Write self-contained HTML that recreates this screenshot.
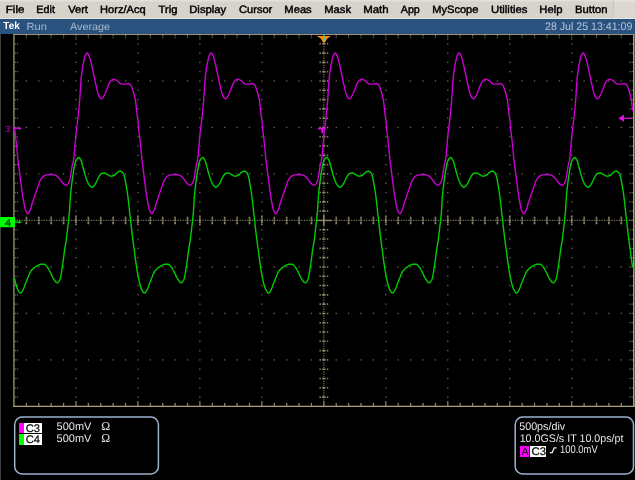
<!DOCTYPE html>
<html><head><meta charset="utf-8"><title>Tek</title>
<style>
html,body{margin:0;padding:0;background:#000;}
body{width:635px;height:480px;position:relative;overflow:hidden;font-family:"Liberation Sans",sans-serif;}
#menubar{position:absolute;left:0;top:0;width:635px;height:20px;background:linear-gradient(#e4e2dc 0px,#dcd9d2 1.6px,#d6d3cb 2.2px,#d6d3cb 17.6px,#e8e6e0 18.2px,#e8e6e0 20px);}
.mi,.t,.badge,#status span{will-change:transform;}
.mi{position:absolute;top:3px;font-size:10.6px;line-height:12px;color:#000;white-space:nowrap;-webkit-text-stroke:0.35px #000;}
#mdiv{position:absolute;left:613px;top:0;width:22px;height:18px;background:rgba(255,255,255,0.12);border-left:1px solid #cbc8c0;}
#status{position:absolute;left:0;top:19.4px;width:635px;height:14.2px;background:#2a527e;}
#status span{position:absolute;top:1px;font-size:10.6px;line-height:12px;white-space:nowrap;}
#lstrip{position:absolute;left:0;top:33.5px;width:1px;height:447px;background:#3c3c3c;}
svg{position:absolute;left:0;top:0;will-change:transform;}
.panel{position:absolute;box-sizing:border-box;border:1.6px solid #9cb2cf;border-radius:8px;}
.t{position:absolute;font-size:10.5px;line-height:12px;color:#e4e4e4;white-space:nowrap;}
.bx{position:absolute;}
</style></head><body>
<div id="menubar"><div id="mdiv"></div></div>
<div id="status"></div>
<div id="lstrip"></div>
<div class="bx" style="left:19.2px;top:422.8px;width:4.8px;height:10px;background:#ff00ff;"></div>
<div class="bx" style="left:24.2px;top:422.6px;width:18px;height:10.2px;background:#fff;"></div>
<div class="bx" style="left:19.2px;top:434.4px;width:4.8px;height:10.4px;background:#00ff00;"></div>
<div class="bx" style="left:24.2px;top:434.4px;width:18px;height:10.4px;background:#fff;"></div>
<div class="bx" style="left:519.9px;top:446.2px;width:9.5px;height:10.4px;background:#ff00ff;"></div>
<div class="bx" style="left:530.2px;top:446.2px;width:16.2px;height:10.4px;background:#fff;"></div>
<svg width="635" height="480" viewBox="0 0 635 480" text-rendering="geometricPrecision">
<g fill="#6c6854"><rect x="75.32" y="43.15" width="1.3" height="1.3"/><rect x="75.32" y="52.45" width="1.3" height="1.3"/><rect x="75.32" y="61.74" width="1.3" height="1.3"/><rect x="75.32" y="71.04" width="1.3" height="1.3"/><rect x="75.32" y="80.34" width="1.3" height="1.3"/><rect x="75.32" y="89.63" width="1.3" height="1.3"/><rect x="75.32" y="98.93" width="1.3" height="1.3"/><rect x="75.32" y="108.23" width="1.3" height="1.3"/><rect x="75.32" y="117.53" width="1.3" height="1.3"/><rect x="75.32" y="126.82" width="1.3" height="1.3"/><rect x="75.32" y="136.12" width="1.3" height="1.3"/><rect x="75.32" y="145.42" width="1.3" height="1.3"/><rect x="75.32" y="154.72" width="1.3" height="1.3"/><rect x="75.32" y="164.01" width="1.3" height="1.3"/><rect x="75.32" y="173.31" width="1.3" height="1.3"/><rect x="75.32" y="182.61" width="1.3" height="1.3"/><rect x="75.32" y="191.91" width="1.3" height="1.3"/><rect x="75.32" y="201.20" width="1.3" height="1.3"/><rect x="75.32" y="210.50" width="1.3" height="1.3"/><rect x="75.32" y="219.80" width="1.3" height="1.3"/><rect x="75.32" y="229.10" width="1.3" height="1.3"/><rect x="75.32" y="238.39" width="1.3" height="1.3"/><rect x="75.32" y="247.69" width="1.3" height="1.3"/><rect x="75.32" y="256.99" width="1.3" height="1.3"/><rect x="75.32" y="266.29" width="1.3" height="1.3"/><rect x="75.32" y="275.59" width="1.3" height="1.3"/><rect x="75.32" y="284.88" width="1.3" height="1.3"/><rect x="75.32" y="294.18" width="1.3" height="1.3"/><rect x="75.32" y="303.48" width="1.3" height="1.3"/><rect x="75.32" y="312.78" width="1.3" height="1.3"/><rect x="75.32" y="322.07" width="1.3" height="1.3"/><rect x="75.32" y="331.37" width="1.3" height="1.3"/><rect x="75.32" y="340.67" width="1.3" height="1.3"/><rect x="75.32" y="349.96" width="1.3" height="1.3"/><rect x="75.32" y="359.26" width="1.3" height="1.3"/><rect x="75.32" y="368.56" width="1.3" height="1.3"/><rect x="75.32" y="377.86" width="1.3" height="1.3"/><rect x="75.32" y="387.15" width="1.3" height="1.3"/><rect x="75.32" y="396.45" width="1.3" height="1.3"/><rect x="137.29" y="43.15" width="1.3" height="1.3"/><rect x="137.29" y="52.45" width="1.3" height="1.3"/><rect x="137.29" y="61.74" width="1.3" height="1.3"/><rect x="137.29" y="71.04" width="1.3" height="1.3"/><rect x="137.29" y="80.34" width="1.3" height="1.3"/><rect x="137.29" y="89.63" width="1.3" height="1.3"/><rect x="137.29" y="98.93" width="1.3" height="1.3"/><rect x="137.29" y="108.23" width="1.3" height="1.3"/><rect x="137.29" y="117.53" width="1.3" height="1.3"/><rect x="137.29" y="126.82" width="1.3" height="1.3"/><rect x="137.29" y="136.12" width="1.3" height="1.3"/><rect x="137.29" y="145.42" width="1.3" height="1.3"/><rect x="137.29" y="154.72" width="1.3" height="1.3"/><rect x="137.29" y="164.01" width="1.3" height="1.3"/><rect x="137.29" y="173.31" width="1.3" height="1.3"/><rect x="137.29" y="182.61" width="1.3" height="1.3"/><rect x="137.29" y="191.91" width="1.3" height="1.3"/><rect x="137.29" y="201.20" width="1.3" height="1.3"/><rect x="137.29" y="210.50" width="1.3" height="1.3"/><rect x="137.29" y="219.80" width="1.3" height="1.3"/><rect x="137.29" y="229.10" width="1.3" height="1.3"/><rect x="137.29" y="238.39" width="1.3" height="1.3"/><rect x="137.29" y="247.69" width="1.3" height="1.3"/><rect x="137.29" y="256.99" width="1.3" height="1.3"/><rect x="137.29" y="266.29" width="1.3" height="1.3"/><rect x="137.29" y="275.59" width="1.3" height="1.3"/><rect x="137.29" y="284.88" width="1.3" height="1.3"/><rect x="137.29" y="294.18" width="1.3" height="1.3"/><rect x="137.29" y="303.48" width="1.3" height="1.3"/><rect x="137.29" y="312.78" width="1.3" height="1.3"/><rect x="137.29" y="322.07" width="1.3" height="1.3"/><rect x="137.29" y="331.37" width="1.3" height="1.3"/><rect x="137.29" y="340.67" width="1.3" height="1.3"/><rect x="137.29" y="349.96" width="1.3" height="1.3"/><rect x="137.29" y="359.26" width="1.3" height="1.3"/><rect x="137.29" y="368.56" width="1.3" height="1.3"/><rect x="137.29" y="377.86" width="1.3" height="1.3"/><rect x="137.29" y="387.15" width="1.3" height="1.3"/><rect x="137.29" y="396.45" width="1.3" height="1.3"/><rect x="199.26" y="43.15" width="1.3" height="1.3"/><rect x="199.26" y="52.45" width="1.3" height="1.3"/><rect x="199.26" y="61.74" width="1.3" height="1.3"/><rect x="199.26" y="71.04" width="1.3" height="1.3"/><rect x="199.26" y="80.34" width="1.3" height="1.3"/><rect x="199.26" y="89.63" width="1.3" height="1.3"/><rect x="199.26" y="98.93" width="1.3" height="1.3"/><rect x="199.26" y="108.23" width="1.3" height="1.3"/><rect x="199.26" y="117.53" width="1.3" height="1.3"/><rect x="199.26" y="126.82" width="1.3" height="1.3"/><rect x="199.26" y="136.12" width="1.3" height="1.3"/><rect x="199.26" y="145.42" width="1.3" height="1.3"/><rect x="199.26" y="154.72" width="1.3" height="1.3"/><rect x="199.26" y="164.01" width="1.3" height="1.3"/><rect x="199.26" y="173.31" width="1.3" height="1.3"/><rect x="199.26" y="182.61" width="1.3" height="1.3"/><rect x="199.26" y="191.91" width="1.3" height="1.3"/><rect x="199.26" y="201.20" width="1.3" height="1.3"/><rect x="199.26" y="210.50" width="1.3" height="1.3"/><rect x="199.26" y="219.80" width="1.3" height="1.3"/><rect x="199.26" y="229.10" width="1.3" height="1.3"/><rect x="199.26" y="238.39" width="1.3" height="1.3"/><rect x="199.26" y="247.69" width="1.3" height="1.3"/><rect x="199.26" y="256.99" width="1.3" height="1.3"/><rect x="199.26" y="266.29" width="1.3" height="1.3"/><rect x="199.26" y="275.59" width="1.3" height="1.3"/><rect x="199.26" y="284.88" width="1.3" height="1.3"/><rect x="199.26" y="294.18" width="1.3" height="1.3"/><rect x="199.26" y="303.48" width="1.3" height="1.3"/><rect x="199.26" y="312.78" width="1.3" height="1.3"/><rect x="199.26" y="322.07" width="1.3" height="1.3"/><rect x="199.26" y="331.37" width="1.3" height="1.3"/><rect x="199.26" y="340.67" width="1.3" height="1.3"/><rect x="199.26" y="349.96" width="1.3" height="1.3"/><rect x="199.26" y="359.26" width="1.3" height="1.3"/><rect x="199.26" y="368.56" width="1.3" height="1.3"/><rect x="199.26" y="377.86" width="1.3" height="1.3"/><rect x="199.26" y="387.15" width="1.3" height="1.3"/><rect x="199.26" y="396.45" width="1.3" height="1.3"/><rect x="261.23" y="43.15" width="1.3" height="1.3"/><rect x="261.23" y="52.45" width="1.3" height="1.3"/><rect x="261.23" y="61.74" width="1.3" height="1.3"/><rect x="261.23" y="71.04" width="1.3" height="1.3"/><rect x="261.23" y="80.34" width="1.3" height="1.3"/><rect x="261.23" y="89.63" width="1.3" height="1.3"/><rect x="261.23" y="98.93" width="1.3" height="1.3"/><rect x="261.23" y="108.23" width="1.3" height="1.3"/><rect x="261.23" y="117.53" width="1.3" height="1.3"/><rect x="261.23" y="126.82" width="1.3" height="1.3"/><rect x="261.23" y="136.12" width="1.3" height="1.3"/><rect x="261.23" y="145.42" width="1.3" height="1.3"/><rect x="261.23" y="154.72" width="1.3" height="1.3"/><rect x="261.23" y="164.01" width="1.3" height="1.3"/><rect x="261.23" y="173.31" width="1.3" height="1.3"/><rect x="261.23" y="182.61" width="1.3" height="1.3"/><rect x="261.23" y="191.91" width="1.3" height="1.3"/><rect x="261.23" y="201.20" width="1.3" height="1.3"/><rect x="261.23" y="210.50" width="1.3" height="1.3"/><rect x="261.23" y="219.80" width="1.3" height="1.3"/><rect x="261.23" y="229.10" width="1.3" height="1.3"/><rect x="261.23" y="238.39" width="1.3" height="1.3"/><rect x="261.23" y="247.69" width="1.3" height="1.3"/><rect x="261.23" y="256.99" width="1.3" height="1.3"/><rect x="261.23" y="266.29" width="1.3" height="1.3"/><rect x="261.23" y="275.59" width="1.3" height="1.3"/><rect x="261.23" y="284.88" width="1.3" height="1.3"/><rect x="261.23" y="294.18" width="1.3" height="1.3"/><rect x="261.23" y="303.48" width="1.3" height="1.3"/><rect x="261.23" y="312.78" width="1.3" height="1.3"/><rect x="261.23" y="322.07" width="1.3" height="1.3"/><rect x="261.23" y="331.37" width="1.3" height="1.3"/><rect x="261.23" y="340.67" width="1.3" height="1.3"/><rect x="261.23" y="349.96" width="1.3" height="1.3"/><rect x="261.23" y="359.26" width="1.3" height="1.3"/><rect x="261.23" y="368.56" width="1.3" height="1.3"/><rect x="261.23" y="377.86" width="1.3" height="1.3"/><rect x="261.23" y="387.15" width="1.3" height="1.3"/><rect x="261.23" y="396.45" width="1.3" height="1.3"/><rect x="385.17" y="43.15" width="1.3" height="1.3"/><rect x="385.17" y="52.45" width="1.3" height="1.3"/><rect x="385.17" y="61.74" width="1.3" height="1.3"/><rect x="385.17" y="71.04" width="1.3" height="1.3"/><rect x="385.17" y="80.34" width="1.3" height="1.3"/><rect x="385.17" y="89.63" width="1.3" height="1.3"/><rect x="385.17" y="98.93" width="1.3" height="1.3"/><rect x="385.17" y="108.23" width="1.3" height="1.3"/><rect x="385.17" y="117.53" width="1.3" height="1.3"/><rect x="385.17" y="126.82" width="1.3" height="1.3"/><rect x="385.17" y="136.12" width="1.3" height="1.3"/><rect x="385.17" y="145.42" width="1.3" height="1.3"/><rect x="385.17" y="154.72" width="1.3" height="1.3"/><rect x="385.17" y="164.01" width="1.3" height="1.3"/><rect x="385.17" y="173.31" width="1.3" height="1.3"/><rect x="385.17" y="182.61" width="1.3" height="1.3"/><rect x="385.17" y="191.91" width="1.3" height="1.3"/><rect x="385.17" y="201.20" width="1.3" height="1.3"/><rect x="385.17" y="210.50" width="1.3" height="1.3"/><rect x="385.17" y="219.80" width="1.3" height="1.3"/><rect x="385.17" y="229.10" width="1.3" height="1.3"/><rect x="385.17" y="238.39" width="1.3" height="1.3"/><rect x="385.17" y="247.69" width="1.3" height="1.3"/><rect x="385.17" y="256.99" width="1.3" height="1.3"/><rect x="385.17" y="266.29" width="1.3" height="1.3"/><rect x="385.17" y="275.59" width="1.3" height="1.3"/><rect x="385.17" y="284.88" width="1.3" height="1.3"/><rect x="385.17" y="294.18" width="1.3" height="1.3"/><rect x="385.17" y="303.48" width="1.3" height="1.3"/><rect x="385.17" y="312.78" width="1.3" height="1.3"/><rect x="385.17" y="322.07" width="1.3" height="1.3"/><rect x="385.17" y="331.37" width="1.3" height="1.3"/><rect x="385.17" y="340.67" width="1.3" height="1.3"/><rect x="385.17" y="349.96" width="1.3" height="1.3"/><rect x="385.17" y="359.26" width="1.3" height="1.3"/><rect x="385.17" y="368.56" width="1.3" height="1.3"/><rect x="385.17" y="377.86" width="1.3" height="1.3"/><rect x="385.17" y="387.15" width="1.3" height="1.3"/><rect x="385.17" y="396.45" width="1.3" height="1.3"/><rect x="447.14" y="43.15" width="1.3" height="1.3"/><rect x="447.14" y="52.45" width="1.3" height="1.3"/><rect x="447.14" y="61.74" width="1.3" height="1.3"/><rect x="447.14" y="71.04" width="1.3" height="1.3"/><rect x="447.14" y="80.34" width="1.3" height="1.3"/><rect x="447.14" y="89.63" width="1.3" height="1.3"/><rect x="447.14" y="98.93" width="1.3" height="1.3"/><rect x="447.14" y="108.23" width="1.3" height="1.3"/><rect x="447.14" y="117.53" width="1.3" height="1.3"/><rect x="447.14" y="126.82" width="1.3" height="1.3"/><rect x="447.14" y="136.12" width="1.3" height="1.3"/><rect x="447.14" y="145.42" width="1.3" height="1.3"/><rect x="447.14" y="154.72" width="1.3" height="1.3"/><rect x="447.14" y="164.01" width="1.3" height="1.3"/><rect x="447.14" y="173.31" width="1.3" height="1.3"/><rect x="447.14" y="182.61" width="1.3" height="1.3"/><rect x="447.14" y="191.91" width="1.3" height="1.3"/><rect x="447.14" y="201.20" width="1.3" height="1.3"/><rect x="447.14" y="210.50" width="1.3" height="1.3"/><rect x="447.14" y="219.80" width="1.3" height="1.3"/><rect x="447.14" y="229.10" width="1.3" height="1.3"/><rect x="447.14" y="238.39" width="1.3" height="1.3"/><rect x="447.14" y="247.69" width="1.3" height="1.3"/><rect x="447.14" y="256.99" width="1.3" height="1.3"/><rect x="447.14" y="266.29" width="1.3" height="1.3"/><rect x="447.14" y="275.59" width="1.3" height="1.3"/><rect x="447.14" y="284.88" width="1.3" height="1.3"/><rect x="447.14" y="294.18" width="1.3" height="1.3"/><rect x="447.14" y="303.48" width="1.3" height="1.3"/><rect x="447.14" y="312.78" width="1.3" height="1.3"/><rect x="447.14" y="322.07" width="1.3" height="1.3"/><rect x="447.14" y="331.37" width="1.3" height="1.3"/><rect x="447.14" y="340.67" width="1.3" height="1.3"/><rect x="447.14" y="349.96" width="1.3" height="1.3"/><rect x="447.14" y="359.26" width="1.3" height="1.3"/><rect x="447.14" y="368.56" width="1.3" height="1.3"/><rect x="447.14" y="377.86" width="1.3" height="1.3"/><rect x="447.14" y="387.15" width="1.3" height="1.3"/><rect x="447.14" y="396.45" width="1.3" height="1.3"/><rect x="509.11" y="43.15" width="1.3" height="1.3"/><rect x="509.11" y="52.45" width="1.3" height="1.3"/><rect x="509.11" y="61.74" width="1.3" height="1.3"/><rect x="509.11" y="71.04" width="1.3" height="1.3"/><rect x="509.11" y="80.34" width="1.3" height="1.3"/><rect x="509.11" y="89.63" width="1.3" height="1.3"/><rect x="509.11" y="98.93" width="1.3" height="1.3"/><rect x="509.11" y="108.23" width="1.3" height="1.3"/><rect x="509.11" y="117.53" width="1.3" height="1.3"/><rect x="509.11" y="126.82" width="1.3" height="1.3"/><rect x="509.11" y="136.12" width="1.3" height="1.3"/><rect x="509.11" y="145.42" width="1.3" height="1.3"/><rect x="509.11" y="154.72" width="1.3" height="1.3"/><rect x="509.11" y="164.01" width="1.3" height="1.3"/><rect x="509.11" y="173.31" width="1.3" height="1.3"/><rect x="509.11" y="182.61" width="1.3" height="1.3"/><rect x="509.11" y="191.91" width="1.3" height="1.3"/><rect x="509.11" y="201.20" width="1.3" height="1.3"/><rect x="509.11" y="210.50" width="1.3" height="1.3"/><rect x="509.11" y="219.80" width="1.3" height="1.3"/><rect x="509.11" y="229.10" width="1.3" height="1.3"/><rect x="509.11" y="238.39" width="1.3" height="1.3"/><rect x="509.11" y="247.69" width="1.3" height="1.3"/><rect x="509.11" y="256.99" width="1.3" height="1.3"/><rect x="509.11" y="266.29" width="1.3" height="1.3"/><rect x="509.11" y="275.59" width="1.3" height="1.3"/><rect x="509.11" y="284.88" width="1.3" height="1.3"/><rect x="509.11" y="294.18" width="1.3" height="1.3"/><rect x="509.11" y="303.48" width="1.3" height="1.3"/><rect x="509.11" y="312.78" width="1.3" height="1.3"/><rect x="509.11" y="322.07" width="1.3" height="1.3"/><rect x="509.11" y="331.37" width="1.3" height="1.3"/><rect x="509.11" y="340.67" width="1.3" height="1.3"/><rect x="509.11" y="349.96" width="1.3" height="1.3"/><rect x="509.11" y="359.26" width="1.3" height="1.3"/><rect x="509.11" y="368.56" width="1.3" height="1.3"/><rect x="509.11" y="377.86" width="1.3" height="1.3"/><rect x="509.11" y="387.15" width="1.3" height="1.3"/><rect x="509.11" y="396.45" width="1.3" height="1.3"/><rect x="571.08" y="43.15" width="1.3" height="1.3"/><rect x="571.08" y="52.45" width="1.3" height="1.3"/><rect x="571.08" y="61.74" width="1.3" height="1.3"/><rect x="571.08" y="71.04" width="1.3" height="1.3"/><rect x="571.08" y="80.34" width="1.3" height="1.3"/><rect x="571.08" y="89.63" width="1.3" height="1.3"/><rect x="571.08" y="98.93" width="1.3" height="1.3"/><rect x="571.08" y="108.23" width="1.3" height="1.3"/><rect x="571.08" y="117.53" width="1.3" height="1.3"/><rect x="571.08" y="126.82" width="1.3" height="1.3"/><rect x="571.08" y="136.12" width="1.3" height="1.3"/><rect x="571.08" y="145.42" width="1.3" height="1.3"/><rect x="571.08" y="154.72" width="1.3" height="1.3"/><rect x="571.08" y="164.01" width="1.3" height="1.3"/><rect x="571.08" y="173.31" width="1.3" height="1.3"/><rect x="571.08" y="182.61" width="1.3" height="1.3"/><rect x="571.08" y="191.91" width="1.3" height="1.3"/><rect x="571.08" y="201.20" width="1.3" height="1.3"/><rect x="571.08" y="210.50" width="1.3" height="1.3"/><rect x="571.08" y="219.80" width="1.3" height="1.3"/><rect x="571.08" y="229.10" width="1.3" height="1.3"/><rect x="571.08" y="238.39" width="1.3" height="1.3"/><rect x="571.08" y="247.69" width="1.3" height="1.3"/><rect x="571.08" y="256.99" width="1.3" height="1.3"/><rect x="571.08" y="266.29" width="1.3" height="1.3"/><rect x="571.08" y="275.59" width="1.3" height="1.3"/><rect x="571.08" y="284.88" width="1.3" height="1.3"/><rect x="571.08" y="294.18" width="1.3" height="1.3"/><rect x="571.08" y="303.48" width="1.3" height="1.3"/><rect x="571.08" y="312.78" width="1.3" height="1.3"/><rect x="571.08" y="322.07" width="1.3" height="1.3"/><rect x="571.08" y="331.37" width="1.3" height="1.3"/><rect x="571.08" y="340.67" width="1.3" height="1.3"/><rect x="571.08" y="349.96" width="1.3" height="1.3"/><rect x="571.08" y="359.26" width="1.3" height="1.3"/><rect x="571.08" y="368.56" width="1.3" height="1.3"/><rect x="571.08" y="377.86" width="1.3" height="1.3"/><rect x="571.08" y="387.15" width="1.3" height="1.3"/><rect x="571.08" y="396.45" width="1.3" height="1.3"/><rect x="25.74" y="80.34" width="1.3" height="1.3"/><rect x="38.14" y="80.34" width="1.3" height="1.3"/><rect x="50.53" y="80.34" width="1.3" height="1.3"/><rect x="62.93" y="80.34" width="1.3" height="1.3"/><rect x="87.71" y="80.34" width="1.3" height="1.3"/><rect x="100.11" y="80.34" width="1.3" height="1.3"/><rect x="112.50" y="80.34" width="1.3" height="1.3"/><rect x="124.90" y="80.34" width="1.3" height="1.3"/><rect x="149.68" y="80.34" width="1.3" height="1.3"/><rect x="162.08" y="80.34" width="1.3" height="1.3"/><rect x="174.47" y="80.34" width="1.3" height="1.3"/><rect x="186.87" y="80.34" width="1.3" height="1.3"/><rect x="211.65" y="80.34" width="1.3" height="1.3"/><rect x="224.05" y="80.34" width="1.3" height="1.3"/><rect x="236.44" y="80.34" width="1.3" height="1.3"/><rect x="248.84" y="80.34" width="1.3" height="1.3"/><rect x="273.62" y="80.34" width="1.3" height="1.3"/><rect x="286.02" y="80.34" width="1.3" height="1.3"/><rect x="298.41" y="80.34" width="1.3" height="1.3"/><rect x="310.81" y="80.34" width="1.3" height="1.3"/><rect x="335.59" y="80.34" width="1.3" height="1.3"/><rect x="347.99" y="80.34" width="1.3" height="1.3"/><rect x="360.38" y="80.34" width="1.3" height="1.3"/><rect x="372.78" y="80.34" width="1.3" height="1.3"/><rect x="397.56" y="80.34" width="1.3" height="1.3"/><rect x="409.96" y="80.34" width="1.3" height="1.3"/><rect x="422.35" y="80.34" width="1.3" height="1.3"/><rect x="434.75" y="80.34" width="1.3" height="1.3"/><rect x="459.53" y="80.34" width="1.3" height="1.3"/><rect x="471.93" y="80.34" width="1.3" height="1.3"/><rect x="484.32" y="80.34" width="1.3" height="1.3"/><rect x="496.72" y="80.34" width="1.3" height="1.3"/><rect x="521.50" y="80.34" width="1.3" height="1.3"/><rect x="533.90" y="80.34" width="1.3" height="1.3"/><rect x="546.29" y="80.34" width="1.3" height="1.3"/><rect x="558.69" y="80.34" width="1.3" height="1.3"/><rect x="583.47" y="80.34" width="1.3" height="1.3"/><rect x="595.87" y="80.34" width="1.3" height="1.3"/><rect x="608.26" y="80.34" width="1.3" height="1.3"/><rect x="620.66" y="80.34" width="1.3" height="1.3"/><rect x="25.74" y="126.82" width="1.3" height="1.3"/><rect x="38.14" y="126.82" width="1.3" height="1.3"/><rect x="50.53" y="126.82" width="1.3" height="1.3"/><rect x="62.93" y="126.82" width="1.3" height="1.3"/><rect x="87.71" y="126.82" width="1.3" height="1.3"/><rect x="100.11" y="126.82" width="1.3" height="1.3"/><rect x="112.50" y="126.82" width="1.3" height="1.3"/><rect x="124.90" y="126.82" width="1.3" height="1.3"/><rect x="149.68" y="126.82" width="1.3" height="1.3"/><rect x="162.08" y="126.82" width="1.3" height="1.3"/><rect x="174.47" y="126.82" width="1.3" height="1.3"/><rect x="186.87" y="126.82" width="1.3" height="1.3"/><rect x="211.65" y="126.82" width="1.3" height="1.3"/><rect x="224.05" y="126.82" width="1.3" height="1.3"/><rect x="236.44" y="126.82" width="1.3" height="1.3"/><rect x="248.84" y="126.82" width="1.3" height="1.3"/><rect x="273.62" y="126.82" width="1.3" height="1.3"/><rect x="286.02" y="126.82" width="1.3" height="1.3"/><rect x="298.41" y="126.82" width="1.3" height="1.3"/><rect x="310.81" y="126.82" width="1.3" height="1.3"/><rect x="335.59" y="126.82" width="1.3" height="1.3"/><rect x="347.99" y="126.82" width="1.3" height="1.3"/><rect x="360.38" y="126.82" width="1.3" height="1.3"/><rect x="372.78" y="126.82" width="1.3" height="1.3"/><rect x="397.56" y="126.82" width="1.3" height="1.3"/><rect x="409.96" y="126.82" width="1.3" height="1.3"/><rect x="422.35" y="126.82" width="1.3" height="1.3"/><rect x="434.75" y="126.82" width="1.3" height="1.3"/><rect x="459.53" y="126.82" width="1.3" height="1.3"/><rect x="471.93" y="126.82" width="1.3" height="1.3"/><rect x="484.32" y="126.82" width="1.3" height="1.3"/><rect x="496.72" y="126.82" width="1.3" height="1.3"/><rect x="521.50" y="126.82" width="1.3" height="1.3"/><rect x="533.90" y="126.82" width="1.3" height="1.3"/><rect x="546.29" y="126.82" width="1.3" height="1.3"/><rect x="558.69" y="126.82" width="1.3" height="1.3"/><rect x="583.47" y="126.82" width="1.3" height="1.3"/><rect x="595.87" y="126.82" width="1.3" height="1.3"/><rect x="608.26" y="126.82" width="1.3" height="1.3"/><rect x="620.66" y="126.82" width="1.3" height="1.3"/><rect x="25.74" y="173.31" width="1.3" height="1.3"/><rect x="38.14" y="173.31" width="1.3" height="1.3"/><rect x="50.53" y="173.31" width="1.3" height="1.3"/><rect x="62.93" y="173.31" width="1.3" height="1.3"/><rect x="87.71" y="173.31" width="1.3" height="1.3"/><rect x="100.11" y="173.31" width="1.3" height="1.3"/><rect x="112.50" y="173.31" width="1.3" height="1.3"/><rect x="124.90" y="173.31" width="1.3" height="1.3"/><rect x="149.68" y="173.31" width="1.3" height="1.3"/><rect x="162.08" y="173.31" width="1.3" height="1.3"/><rect x="174.47" y="173.31" width="1.3" height="1.3"/><rect x="186.87" y="173.31" width="1.3" height="1.3"/><rect x="211.65" y="173.31" width="1.3" height="1.3"/><rect x="224.05" y="173.31" width="1.3" height="1.3"/><rect x="236.44" y="173.31" width="1.3" height="1.3"/><rect x="248.84" y="173.31" width="1.3" height="1.3"/><rect x="273.62" y="173.31" width="1.3" height="1.3"/><rect x="286.02" y="173.31" width="1.3" height="1.3"/><rect x="298.41" y="173.31" width="1.3" height="1.3"/><rect x="310.81" y="173.31" width="1.3" height="1.3"/><rect x="335.59" y="173.31" width="1.3" height="1.3"/><rect x="347.99" y="173.31" width="1.3" height="1.3"/><rect x="360.38" y="173.31" width="1.3" height="1.3"/><rect x="372.78" y="173.31" width="1.3" height="1.3"/><rect x="397.56" y="173.31" width="1.3" height="1.3"/><rect x="409.96" y="173.31" width="1.3" height="1.3"/><rect x="422.35" y="173.31" width="1.3" height="1.3"/><rect x="434.75" y="173.31" width="1.3" height="1.3"/><rect x="459.53" y="173.31" width="1.3" height="1.3"/><rect x="471.93" y="173.31" width="1.3" height="1.3"/><rect x="484.32" y="173.31" width="1.3" height="1.3"/><rect x="496.72" y="173.31" width="1.3" height="1.3"/><rect x="521.50" y="173.31" width="1.3" height="1.3"/><rect x="533.90" y="173.31" width="1.3" height="1.3"/><rect x="546.29" y="173.31" width="1.3" height="1.3"/><rect x="558.69" y="173.31" width="1.3" height="1.3"/><rect x="583.47" y="173.31" width="1.3" height="1.3"/><rect x="595.87" y="173.31" width="1.3" height="1.3"/><rect x="608.26" y="173.31" width="1.3" height="1.3"/><rect x="620.66" y="173.31" width="1.3" height="1.3"/><rect x="25.74" y="266.29" width="1.3" height="1.3"/><rect x="38.14" y="266.29" width="1.3" height="1.3"/><rect x="50.53" y="266.29" width="1.3" height="1.3"/><rect x="62.93" y="266.29" width="1.3" height="1.3"/><rect x="87.71" y="266.29" width="1.3" height="1.3"/><rect x="100.11" y="266.29" width="1.3" height="1.3"/><rect x="112.50" y="266.29" width="1.3" height="1.3"/><rect x="124.90" y="266.29" width="1.3" height="1.3"/><rect x="149.68" y="266.29" width="1.3" height="1.3"/><rect x="162.08" y="266.29" width="1.3" height="1.3"/><rect x="174.47" y="266.29" width="1.3" height="1.3"/><rect x="186.87" y="266.29" width="1.3" height="1.3"/><rect x="211.65" y="266.29" width="1.3" height="1.3"/><rect x="224.05" y="266.29" width="1.3" height="1.3"/><rect x="236.44" y="266.29" width="1.3" height="1.3"/><rect x="248.84" y="266.29" width="1.3" height="1.3"/><rect x="273.62" y="266.29" width="1.3" height="1.3"/><rect x="286.02" y="266.29" width="1.3" height="1.3"/><rect x="298.41" y="266.29" width="1.3" height="1.3"/><rect x="310.81" y="266.29" width="1.3" height="1.3"/><rect x="335.59" y="266.29" width="1.3" height="1.3"/><rect x="347.99" y="266.29" width="1.3" height="1.3"/><rect x="360.38" y="266.29" width="1.3" height="1.3"/><rect x="372.78" y="266.29" width="1.3" height="1.3"/><rect x="397.56" y="266.29" width="1.3" height="1.3"/><rect x="409.96" y="266.29" width="1.3" height="1.3"/><rect x="422.35" y="266.29" width="1.3" height="1.3"/><rect x="434.75" y="266.29" width="1.3" height="1.3"/><rect x="459.53" y="266.29" width="1.3" height="1.3"/><rect x="471.93" y="266.29" width="1.3" height="1.3"/><rect x="484.32" y="266.29" width="1.3" height="1.3"/><rect x="496.72" y="266.29" width="1.3" height="1.3"/><rect x="521.50" y="266.29" width="1.3" height="1.3"/><rect x="533.90" y="266.29" width="1.3" height="1.3"/><rect x="546.29" y="266.29" width="1.3" height="1.3"/><rect x="558.69" y="266.29" width="1.3" height="1.3"/><rect x="583.47" y="266.29" width="1.3" height="1.3"/><rect x="595.87" y="266.29" width="1.3" height="1.3"/><rect x="608.26" y="266.29" width="1.3" height="1.3"/><rect x="620.66" y="266.29" width="1.3" height="1.3"/><rect x="25.74" y="312.77" width="1.3" height="1.3"/><rect x="38.14" y="312.77" width="1.3" height="1.3"/><rect x="50.53" y="312.77" width="1.3" height="1.3"/><rect x="62.93" y="312.77" width="1.3" height="1.3"/><rect x="87.71" y="312.77" width="1.3" height="1.3"/><rect x="100.11" y="312.77" width="1.3" height="1.3"/><rect x="112.50" y="312.77" width="1.3" height="1.3"/><rect x="124.90" y="312.77" width="1.3" height="1.3"/><rect x="149.68" y="312.77" width="1.3" height="1.3"/><rect x="162.08" y="312.77" width="1.3" height="1.3"/><rect x="174.47" y="312.77" width="1.3" height="1.3"/><rect x="186.87" y="312.77" width="1.3" height="1.3"/><rect x="211.65" y="312.77" width="1.3" height="1.3"/><rect x="224.05" y="312.77" width="1.3" height="1.3"/><rect x="236.44" y="312.77" width="1.3" height="1.3"/><rect x="248.84" y="312.77" width="1.3" height="1.3"/><rect x="273.62" y="312.77" width="1.3" height="1.3"/><rect x="286.02" y="312.77" width="1.3" height="1.3"/><rect x="298.41" y="312.77" width="1.3" height="1.3"/><rect x="310.81" y="312.77" width="1.3" height="1.3"/><rect x="335.59" y="312.77" width="1.3" height="1.3"/><rect x="347.99" y="312.77" width="1.3" height="1.3"/><rect x="360.38" y="312.77" width="1.3" height="1.3"/><rect x="372.78" y="312.77" width="1.3" height="1.3"/><rect x="397.56" y="312.77" width="1.3" height="1.3"/><rect x="409.96" y="312.77" width="1.3" height="1.3"/><rect x="422.35" y="312.77" width="1.3" height="1.3"/><rect x="434.75" y="312.77" width="1.3" height="1.3"/><rect x="459.53" y="312.77" width="1.3" height="1.3"/><rect x="471.93" y="312.77" width="1.3" height="1.3"/><rect x="484.32" y="312.77" width="1.3" height="1.3"/><rect x="496.72" y="312.77" width="1.3" height="1.3"/><rect x="521.50" y="312.77" width="1.3" height="1.3"/><rect x="533.90" y="312.77" width="1.3" height="1.3"/><rect x="546.29" y="312.77" width="1.3" height="1.3"/><rect x="558.69" y="312.77" width="1.3" height="1.3"/><rect x="583.47" y="312.77" width="1.3" height="1.3"/><rect x="595.87" y="312.77" width="1.3" height="1.3"/><rect x="608.26" y="312.77" width="1.3" height="1.3"/><rect x="620.66" y="312.77" width="1.3" height="1.3"/><rect x="25.74" y="359.26" width="1.3" height="1.3"/><rect x="38.14" y="359.26" width="1.3" height="1.3"/><rect x="50.53" y="359.26" width="1.3" height="1.3"/><rect x="62.93" y="359.26" width="1.3" height="1.3"/><rect x="87.71" y="359.26" width="1.3" height="1.3"/><rect x="100.11" y="359.26" width="1.3" height="1.3"/><rect x="112.50" y="359.26" width="1.3" height="1.3"/><rect x="124.90" y="359.26" width="1.3" height="1.3"/><rect x="149.68" y="359.26" width="1.3" height="1.3"/><rect x="162.08" y="359.26" width="1.3" height="1.3"/><rect x="174.47" y="359.26" width="1.3" height="1.3"/><rect x="186.87" y="359.26" width="1.3" height="1.3"/><rect x="211.65" y="359.26" width="1.3" height="1.3"/><rect x="224.05" y="359.26" width="1.3" height="1.3"/><rect x="236.44" y="359.26" width="1.3" height="1.3"/><rect x="248.84" y="359.26" width="1.3" height="1.3"/><rect x="273.62" y="359.26" width="1.3" height="1.3"/><rect x="286.02" y="359.26" width="1.3" height="1.3"/><rect x="298.41" y="359.26" width="1.3" height="1.3"/><rect x="310.81" y="359.26" width="1.3" height="1.3"/><rect x="335.59" y="359.26" width="1.3" height="1.3"/><rect x="347.99" y="359.26" width="1.3" height="1.3"/><rect x="360.38" y="359.26" width="1.3" height="1.3"/><rect x="372.78" y="359.26" width="1.3" height="1.3"/><rect x="397.56" y="359.26" width="1.3" height="1.3"/><rect x="409.96" y="359.26" width="1.3" height="1.3"/><rect x="422.35" y="359.26" width="1.3" height="1.3"/><rect x="434.75" y="359.26" width="1.3" height="1.3"/><rect x="459.53" y="359.26" width="1.3" height="1.3"/><rect x="471.93" y="359.26" width="1.3" height="1.3"/><rect x="484.32" y="359.26" width="1.3" height="1.3"/><rect x="496.72" y="359.26" width="1.3" height="1.3"/><rect x="521.50" y="359.26" width="1.3" height="1.3"/><rect x="533.90" y="359.26" width="1.3" height="1.3"/><rect x="546.29" y="359.26" width="1.3" height="1.3"/><rect x="558.69" y="359.26" width="1.3" height="1.3"/><rect x="583.47" y="359.26" width="1.3" height="1.3"/><rect x="595.87" y="359.26" width="1.3" height="1.3"/><rect x="608.26" y="359.26" width="1.3" height="1.3"/><rect x="620.66" y="359.26" width="1.3" height="1.3"/></g>
<g stroke="#77725c" stroke-width="1.2" stroke-dasharray="1.1 1.0 1.2 0.8 1.2 5"><line x1="26.39" y1="35.10" x2="26.39" y2="38.20"/><line x1="38.79" y1="35.10" x2="38.79" y2="38.20"/><line x1="51.18" y1="35.10" x2="51.18" y2="38.20"/><line x1="63.58" y1="35.10" x2="63.58" y2="38.20"/><line x1="75.97" y1="35.10" x2="75.97" y2="40.10"/><line x1="88.36" y1="35.10" x2="88.36" y2="38.20"/><line x1="100.76" y1="35.10" x2="100.76" y2="38.20"/><line x1="113.15" y1="35.10" x2="113.15" y2="38.20"/><line x1="125.55" y1="35.10" x2="125.55" y2="38.20"/><line x1="137.94" y1="35.10" x2="137.94" y2="40.10"/><line x1="150.33" y1="35.10" x2="150.33" y2="38.20"/><line x1="162.73" y1="35.10" x2="162.73" y2="38.20"/><line x1="175.12" y1="35.10" x2="175.12" y2="38.20"/><line x1="187.52" y1="35.10" x2="187.52" y2="38.20"/><line x1="199.91" y1="35.10" x2="199.91" y2="40.10"/><line x1="212.30" y1="35.10" x2="212.30" y2="38.20"/><line x1="224.70" y1="35.10" x2="224.70" y2="38.20"/><line x1="237.09" y1="35.10" x2="237.09" y2="38.20"/><line x1="249.49" y1="35.10" x2="249.49" y2="38.20"/><line x1="261.88" y1="35.10" x2="261.88" y2="40.10"/><line x1="274.27" y1="35.10" x2="274.27" y2="38.20"/><line x1="286.67" y1="35.10" x2="286.67" y2="38.20"/><line x1="299.06" y1="35.10" x2="299.06" y2="38.20"/><line x1="311.46" y1="35.10" x2="311.46" y2="38.20"/><line x1="323.85" y1="35.10" x2="323.85" y2="40.10"/><line x1="336.24" y1="35.10" x2="336.24" y2="38.20"/><line x1="348.64" y1="35.10" x2="348.64" y2="38.20"/><line x1="361.03" y1="35.10" x2="361.03" y2="38.20"/><line x1="373.43" y1="35.10" x2="373.43" y2="38.20"/><line x1="385.82" y1="35.10" x2="385.82" y2="40.10"/><line x1="398.21" y1="35.10" x2="398.21" y2="38.20"/><line x1="410.61" y1="35.10" x2="410.61" y2="38.20"/><line x1="423.00" y1="35.10" x2="423.00" y2="38.20"/><line x1="435.40" y1="35.10" x2="435.40" y2="38.20"/><line x1="447.79" y1="35.10" x2="447.79" y2="40.10"/><line x1="460.18" y1="35.10" x2="460.18" y2="38.20"/><line x1="472.58" y1="35.10" x2="472.58" y2="38.20"/><line x1="484.97" y1="35.10" x2="484.97" y2="38.20"/><line x1="497.37" y1="35.10" x2="497.37" y2="38.20"/><line x1="509.76" y1="35.10" x2="509.76" y2="40.10"/><line x1="522.15" y1="35.10" x2="522.15" y2="38.20"/><line x1="534.55" y1="35.10" x2="534.55" y2="38.20"/><line x1="546.94" y1="35.10" x2="546.94" y2="38.20"/><line x1="559.34" y1="35.10" x2="559.34" y2="38.20"/><line x1="571.73" y1="35.10" x2="571.73" y2="40.10"/><line x1="584.12" y1="35.10" x2="584.12" y2="38.20"/><line x1="596.52" y1="35.10" x2="596.52" y2="38.20"/><line x1="608.91" y1="35.10" x2="608.91" y2="38.20"/><line x1="621.31" y1="35.10" x2="621.31" y2="38.20"/><line x1="14.70" y1="43.80" x2="18.60" y2="43.80"/><line x1="632.80" y1="43.80" x2="628.90" y2="43.80"/><line x1="14.70" y1="53.09" x2="18.60" y2="53.09"/><line x1="632.80" y1="53.09" x2="628.90" y2="53.09"/><line x1="14.70" y1="62.39" x2="18.60" y2="62.39"/><line x1="632.80" y1="62.39" x2="628.90" y2="62.39"/><line x1="14.70" y1="71.69" x2="18.60" y2="71.69"/><line x1="632.80" y1="71.69" x2="628.90" y2="71.69"/><line x1="14.70" y1="80.99" x2="18.60" y2="80.99"/><line x1="632.80" y1="80.99" x2="628.90" y2="80.99"/><line x1="14.70" y1="90.28" x2="18.60" y2="90.28"/><line x1="632.80" y1="90.28" x2="628.90" y2="90.28"/><line x1="14.70" y1="99.58" x2="18.60" y2="99.58"/><line x1="632.80" y1="99.58" x2="628.90" y2="99.58"/><line x1="14.70" y1="108.88" x2="18.60" y2="108.88"/><line x1="632.80" y1="108.88" x2="628.90" y2="108.88"/><line x1="14.70" y1="118.18" x2="18.60" y2="118.18"/><line x1="632.80" y1="118.18" x2="628.90" y2="118.18"/><line x1="14.70" y1="127.47" x2="18.60" y2="127.47"/><line x1="632.80" y1="127.47" x2="628.90" y2="127.47"/><line x1="14.70" y1="136.77" x2="18.60" y2="136.77"/><line x1="632.80" y1="136.77" x2="628.90" y2="136.77"/><line x1="14.70" y1="146.07" x2="18.60" y2="146.07"/><line x1="632.80" y1="146.07" x2="628.90" y2="146.07"/><line x1="14.70" y1="155.37" x2="18.60" y2="155.37"/><line x1="632.80" y1="155.37" x2="628.90" y2="155.37"/><line x1="14.70" y1="164.66" x2="18.60" y2="164.66"/><line x1="632.80" y1="164.66" x2="628.90" y2="164.66"/><line x1="14.70" y1="173.96" x2="18.60" y2="173.96"/><line x1="632.80" y1="173.96" x2="628.90" y2="173.96"/><line x1="14.70" y1="183.26" x2="18.60" y2="183.26"/><line x1="632.80" y1="183.26" x2="628.90" y2="183.26"/><line x1="14.70" y1="192.56" x2="18.60" y2="192.56"/><line x1="632.80" y1="192.56" x2="628.90" y2="192.56"/><line x1="14.70" y1="201.85" x2="18.60" y2="201.85"/><line x1="632.80" y1="201.85" x2="628.90" y2="201.85"/><line x1="14.70" y1="211.15" x2="18.60" y2="211.15"/><line x1="632.80" y1="211.15" x2="628.90" y2="211.15"/><line x1="14.70" y1="220.45" x2="18.60" y2="220.45"/><line x1="632.80" y1="220.45" x2="628.90" y2="220.45"/><line x1="14.70" y1="229.75" x2="18.60" y2="229.75"/><line x1="632.80" y1="229.75" x2="628.90" y2="229.75"/><line x1="14.70" y1="239.04" x2="18.60" y2="239.04"/><line x1="632.80" y1="239.04" x2="628.90" y2="239.04"/><line x1="14.70" y1="248.34" x2="18.60" y2="248.34"/><line x1="632.80" y1="248.34" x2="628.90" y2="248.34"/><line x1="14.70" y1="257.64" x2="18.60" y2="257.64"/><line x1="632.80" y1="257.64" x2="628.90" y2="257.64"/><line x1="14.70" y1="266.94" x2="18.60" y2="266.94"/><line x1="632.80" y1="266.94" x2="628.90" y2="266.94"/><line x1="14.70" y1="276.24" x2="18.60" y2="276.24"/><line x1="632.80" y1="276.24" x2="628.90" y2="276.24"/><line x1="14.70" y1="285.53" x2="18.60" y2="285.53"/><line x1="632.80" y1="285.53" x2="628.90" y2="285.53"/><line x1="14.70" y1="294.83" x2="18.60" y2="294.83"/><line x1="632.80" y1="294.83" x2="628.90" y2="294.83"/><line x1="14.70" y1="304.13" x2="18.60" y2="304.13"/><line x1="632.80" y1="304.13" x2="628.90" y2="304.13"/><line x1="14.70" y1="313.43" x2="18.60" y2="313.43"/><line x1="632.80" y1="313.43" x2="628.90" y2="313.43"/><line x1="14.70" y1="322.72" x2="18.60" y2="322.72"/><line x1="632.80" y1="322.72" x2="628.90" y2="322.72"/><line x1="14.70" y1="332.02" x2="18.60" y2="332.02"/><line x1="632.80" y1="332.02" x2="628.90" y2="332.02"/><line x1="14.70" y1="341.32" x2="18.60" y2="341.32"/><line x1="632.80" y1="341.32" x2="628.90" y2="341.32"/><line x1="14.70" y1="350.61" x2="18.60" y2="350.61"/><line x1="632.80" y1="350.61" x2="628.90" y2="350.61"/><line x1="14.70" y1="359.91" x2="18.60" y2="359.91"/><line x1="632.80" y1="359.91" x2="628.90" y2="359.91"/><line x1="14.70" y1="369.21" x2="18.60" y2="369.21"/><line x1="632.80" y1="369.21" x2="628.90" y2="369.21"/><line x1="14.70" y1="378.51" x2="18.60" y2="378.51"/><line x1="632.80" y1="378.51" x2="628.90" y2="378.51"/><line x1="14.70" y1="387.80" x2="18.60" y2="387.80"/><line x1="632.80" y1="387.80" x2="628.90" y2="387.80"/><line x1="14.70" y1="397.10" x2="18.60" y2="397.10"/><line x1="632.80" y1="397.10" x2="628.90" y2="397.10"/></g>
<g stroke="#8c866a" stroke-width="1.25"><line x1="26.39" y1="405.90" x2="26.39" y2="402.90"/><line x1="38.79" y1="405.90" x2="38.79" y2="402.90"/><line x1="51.18" y1="405.90" x2="51.18" y2="402.90"/><line x1="63.58" y1="405.90" x2="63.58" y2="402.90"/><line x1="75.97" y1="405.90" x2="75.97" y2="401.00"/><line x1="88.36" y1="405.90" x2="88.36" y2="402.90"/><line x1="100.76" y1="405.90" x2="100.76" y2="402.90"/><line x1="113.15" y1="405.90" x2="113.15" y2="402.90"/><line x1="125.55" y1="405.90" x2="125.55" y2="402.90"/><line x1="137.94" y1="405.90" x2="137.94" y2="401.00"/><line x1="150.33" y1="405.90" x2="150.33" y2="402.90"/><line x1="162.73" y1="405.90" x2="162.73" y2="402.90"/><line x1="175.12" y1="405.90" x2="175.12" y2="402.90"/><line x1="187.52" y1="405.90" x2="187.52" y2="402.90"/><line x1="199.91" y1="405.90" x2="199.91" y2="401.00"/><line x1="212.30" y1="405.90" x2="212.30" y2="402.90"/><line x1="224.70" y1="405.90" x2="224.70" y2="402.90"/><line x1="237.09" y1="405.90" x2="237.09" y2="402.90"/><line x1="249.49" y1="405.90" x2="249.49" y2="402.90"/><line x1="261.88" y1="405.90" x2="261.88" y2="401.00"/><line x1="274.27" y1="405.90" x2="274.27" y2="402.90"/><line x1="286.67" y1="405.90" x2="286.67" y2="402.90"/><line x1="299.06" y1="405.90" x2="299.06" y2="402.90"/><line x1="311.46" y1="405.90" x2="311.46" y2="402.90"/><line x1="323.85" y1="405.90" x2="323.85" y2="401.00"/><line x1="336.24" y1="405.90" x2="336.24" y2="402.90"/><line x1="348.64" y1="405.90" x2="348.64" y2="402.90"/><line x1="361.03" y1="405.90" x2="361.03" y2="402.90"/><line x1="373.43" y1="405.90" x2="373.43" y2="402.90"/><line x1="385.82" y1="405.90" x2="385.82" y2="401.00"/><line x1="398.21" y1="405.90" x2="398.21" y2="402.90"/><line x1="410.61" y1="405.90" x2="410.61" y2="402.90"/><line x1="423.00" y1="405.90" x2="423.00" y2="402.90"/><line x1="435.40" y1="405.90" x2="435.40" y2="402.90"/><line x1="447.79" y1="405.90" x2="447.79" y2="401.00"/><line x1="460.18" y1="405.90" x2="460.18" y2="402.90"/><line x1="472.58" y1="405.90" x2="472.58" y2="402.90"/><line x1="484.97" y1="405.90" x2="484.97" y2="402.90"/><line x1="497.37" y1="405.90" x2="497.37" y2="402.90"/><line x1="509.76" y1="405.90" x2="509.76" y2="401.00"/><line x1="522.15" y1="405.90" x2="522.15" y2="402.90"/><line x1="534.55" y1="405.90" x2="534.55" y2="402.90"/><line x1="546.94" y1="405.90" x2="546.94" y2="402.90"/><line x1="559.34" y1="405.90" x2="559.34" y2="402.90"/><line x1="571.73" y1="405.90" x2="571.73" y2="401.00"/><line x1="584.12" y1="405.90" x2="584.12" y2="402.90"/><line x1="596.52" y1="405.90" x2="596.52" y2="402.90"/><line x1="608.91" y1="405.90" x2="608.91" y2="402.90"/><line x1="621.31" y1="405.90" x2="621.31" y2="402.90"/></g>
<line x1="14.0" y1="220.45" x2="633.7" y2="220.45" stroke="#767159" stroke-width="1.2" stroke-dasharray="1.2 1.279"/>
<line x1="323.85" y1="34.5" x2="323.85" y2="406.4" stroke="#767159" stroke-width="1.2" stroke-dasharray="1.2 1.124"/>
<g stroke="#8a846a" stroke-width="1.7" stroke-dasharray="2.2 0.45"><line x1="26.39" y1="216.65" x2="26.39" y2="224.25"/><line x1="38.79" y1="216.65" x2="38.79" y2="224.25"/><line x1="51.18" y1="216.65" x2="51.18" y2="224.25"/><line x1="63.58" y1="216.65" x2="63.58" y2="224.25"/><line x1="75.97" y1="215.55" x2="75.97" y2="225.35"/><line x1="88.36" y1="216.65" x2="88.36" y2="224.25"/><line x1="100.76" y1="216.65" x2="100.76" y2="224.25"/><line x1="113.15" y1="216.65" x2="113.15" y2="224.25"/><line x1="125.55" y1="216.65" x2="125.55" y2="224.25"/><line x1="137.94" y1="215.55" x2="137.94" y2="225.35"/><line x1="150.33" y1="216.65" x2="150.33" y2="224.25"/><line x1="162.73" y1="216.65" x2="162.73" y2="224.25"/><line x1="175.12" y1="216.65" x2="175.12" y2="224.25"/><line x1="187.52" y1="216.65" x2="187.52" y2="224.25"/><line x1="199.91" y1="215.55" x2="199.91" y2="225.35"/><line x1="212.30" y1="216.65" x2="212.30" y2="224.25"/><line x1="224.70" y1="216.65" x2="224.70" y2="224.25"/><line x1="237.09" y1="216.65" x2="237.09" y2="224.25"/><line x1="249.49" y1="216.65" x2="249.49" y2="224.25"/><line x1="261.88" y1="215.55" x2="261.88" y2="225.35"/><line x1="274.27" y1="216.65" x2="274.27" y2="224.25"/><line x1="286.67" y1="216.65" x2="286.67" y2="224.25"/><line x1="299.06" y1="216.65" x2="299.06" y2="224.25"/><line x1="311.46" y1="216.65" x2="311.46" y2="224.25"/><line x1="336.24" y1="216.65" x2="336.24" y2="224.25"/><line x1="348.64" y1="216.65" x2="348.64" y2="224.25"/><line x1="361.03" y1="216.65" x2="361.03" y2="224.25"/><line x1="373.43" y1="216.65" x2="373.43" y2="224.25"/><line x1="385.82" y1="215.55" x2="385.82" y2="225.35"/><line x1="398.21" y1="216.65" x2="398.21" y2="224.25"/><line x1="410.61" y1="216.65" x2="410.61" y2="224.25"/><line x1="423.00" y1="216.65" x2="423.00" y2="224.25"/><line x1="435.40" y1="216.65" x2="435.40" y2="224.25"/><line x1="447.79" y1="215.55" x2="447.79" y2="225.35"/><line x1="460.18" y1="216.65" x2="460.18" y2="224.25"/><line x1="472.58" y1="216.65" x2="472.58" y2="224.25"/><line x1="484.97" y1="216.65" x2="484.97" y2="224.25"/><line x1="497.37" y1="216.65" x2="497.37" y2="224.25"/><line x1="509.76" y1="215.55" x2="509.76" y2="225.35"/><line x1="522.15" y1="216.65" x2="522.15" y2="224.25"/><line x1="534.55" y1="216.65" x2="534.55" y2="224.25"/><line x1="546.94" y1="216.65" x2="546.94" y2="224.25"/><line x1="559.34" y1="216.65" x2="559.34" y2="224.25"/><line x1="571.73" y1="215.55" x2="571.73" y2="225.35"/><line x1="584.12" y1="216.65" x2="584.12" y2="224.25"/><line x1="596.52" y1="216.65" x2="596.52" y2="224.25"/><line x1="608.91" y1="216.65" x2="608.91" y2="224.25"/><line x1="621.31" y1="216.65" x2="621.31" y2="224.25"/></g>
<g stroke="#8a846a" stroke-width="1.6" stroke-dasharray="1.4 1.3 3.4 1.3 1.4"><line x1="319.45" y1="43.80" x2="328.25" y2="43.80"/><line x1="319.45" y1="53.09" x2="328.25" y2="53.09"/><line x1="319.45" y1="62.39" x2="328.25" y2="62.39"/><line x1="319.45" y1="71.69" x2="328.25" y2="71.69"/><line x1="319.45" y1="80.99" x2="328.25" y2="80.99"/><line x1="319.45" y1="90.28" x2="328.25" y2="90.28"/><line x1="319.45" y1="99.58" x2="328.25" y2="99.58"/><line x1="319.45" y1="108.88" x2="328.25" y2="108.88"/><line x1="319.45" y1="118.18" x2="328.25" y2="118.18"/><line x1="319.45" y1="127.47" x2="328.25" y2="127.47"/><line x1="319.45" y1="136.77" x2="328.25" y2="136.77"/><line x1="319.45" y1="146.07" x2="328.25" y2="146.07"/><line x1="319.45" y1="155.37" x2="328.25" y2="155.37"/><line x1="319.45" y1="164.66" x2="328.25" y2="164.66"/><line x1="319.45" y1="173.96" x2="328.25" y2="173.96"/><line x1="319.45" y1="183.26" x2="328.25" y2="183.26"/><line x1="319.45" y1="192.56" x2="328.25" y2="192.56"/><line x1="319.45" y1="201.85" x2="328.25" y2="201.85"/><line x1="319.45" y1="211.15" x2="328.25" y2="211.15"/><line x1="319.45" y1="229.75" x2="328.25" y2="229.75"/><line x1="319.45" y1="239.04" x2="328.25" y2="239.04"/><line x1="319.45" y1="248.34" x2="328.25" y2="248.34"/><line x1="319.45" y1="257.64" x2="328.25" y2="257.64"/><line x1="319.45" y1="266.94" x2="328.25" y2="266.94"/><line x1="319.45" y1="276.24" x2="328.25" y2="276.24"/><line x1="319.45" y1="285.53" x2="328.25" y2="285.53"/><line x1="319.45" y1="294.83" x2="328.25" y2="294.83"/><line x1="319.45" y1="304.13" x2="328.25" y2="304.13"/><line x1="319.45" y1="313.43" x2="328.25" y2="313.43"/><line x1="319.45" y1="322.72" x2="328.25" y2="322.72"/><line x1="319.45" y1="332.02" x2="328.25" y2="332.02"/><line x1="319.45" y1="341.32" x2="328.25" y2="341.32"/><line x1="319.45" y1="350.61" x2="328.25" y2="350.61"/><line x1="319.45" y1="359.91" x2="328.25" y2="359.91"/><line x1="319.45" y1="369.21" x2="328.25" y2="369.21"/><line x1="319.45" y1="378.51" x2="328.25" y2="378.51"/><line x1="319.45" y1="387.80" x2="328.25" y2="387.80"/><line x1="319.45" y1="397.10" x2="328.25" y2="397.10"/></g>
<line x1="316.25" y1="220.45" x2="331.65" y2="220.45" stroke="#8a846a" stroke-width="1.4"/>
<line x1="323.85" y1="215.05" x2="323.85" y2="225.85" stroke="#8a846a" stroke-width="1.6"/>
<line x1="13.95" y1="34.0" x2="13.95" y2="407.0" stroke="#a89f7c" stroke-width="1.25"/>
<line x1="633.8000000000001" y1="34.0" x2="633.8000000000001" y2="407.0" stroke="#a89f7c" stroke-width="1.6"/>
<line x1="13.3" y1="34.5" x2="634.5" y2="34.5" stroke="#9a9272" stroke-width="1.1"/>
<line x1="13.3" y1="406.4" x2="634.5" y2="406.4" stroke="#a89f7c" stroke-width="1.25"/>
<polyline points="14.6,278.4 15.1,280.8 15.6,283.0 16.1,284.8 16.6,286.5 17.1,288.1 17.6,289.4 18.1,290.4 18.6,291.2 19.1,292.0 19.6,292.6 20.1,293.0 20.6,293.1 21.1,292.8 21.6,292.3 22.1,291.5 22.6,290.7 23.1,289.9 23.6,288.7 24.1,287.4 24.6,286.0 25.1,284.6 25.6,283.3 26.1,282.1 26.6,280.8 27.1,279.5 27.6,278.3 28.1,277.1 28.6,275.8 29.1,274.6 29.6,273.4 30.1,272.4 30.6,271.6 31.1,270.9 31.6,270.3 32.1,269.7 32.6,269.1 33.1,268.7 33.6,268.2 34.1,267.8 34.6,267.4 35.1,267.1 35.6,266.8 36.1,266.5 36.6,266.2 37.1,265.9 37.6,265.6 38.1,265.4 38.6,265.1 39.1,264.8 39.6,264.5 40.1,264.4 40.6,264.2 41.1,264.2 41.6,264.2 42.1,264.2 42.6,264.2 43.1,264.2 43.6,264.2 44.1,264.2 44.6,264.3 45.1,264.6 45.6,265.0 46.1,265.6 46.6,266.2 47.1,266.9 47.6,267.5 48.1,268.2 48.6,269.1 49.1,270.0 49.6,271.0 50.1,271.9 50.6,272.9 51.1,273.9 51.6,275.0 52.1,276.1 52.6,277.2 53.1,278.2 53.6,279.0 54.1,279.7 54.6,280.4 55.1,281.1 55.6,281.8 56.1,282.3 56.6,282.6 57.1,282.8 57.6,282.7 58.1,282.4 58.6,281.8 59.1,281.1 59.6,280.3 60.1,279.2 60.6,277.1 61.1,274.4 61.6,271.6 62.1,268.4 62.6,265.0 63.1,261.4 63.6,257.7 64.1,253.8 64.6,250.1 65.1,246.9 65.6,243.9 66.1,240.7 66.6,237.0 67.1,233.1 67.6,229.0 68.1,224.6 68.6,220.0 69.1,215.1 69.6,210.0 70.1,200.4 70.6,194.0 71.1,189.0 71.6,184.8 72.1,181.1 72.6,177.6 73.1,174.0 73.6,170.7 74.1,167.8 74.6,165.1 75.1,162.8 75.6,161.4 76.1,160.4 76.6,159.4 77.1,158.6 77.6,158.0 78.1,157.6 78.6,157.4 79.1,157.5 79.6,158.0 80.1,158.8 80.6,159.7 81.1,160.7 81.6,161.9 82.1,163.7 82.6,165.7 83.1,167.6 83.6,169.5 84.1,171.4 84.6,173.2 85.1,174.9 85.6,176.5 86.1,178.0 86.6,179.4 87.1,180.7 87.6,181.9 88.1,183.1 88.6,184.1 89.1,184.9 89.6,185.5 90.1,186.1 90.6,186.6 91.1,186.9 91.6,187.2 92.1,187.2 92.6,187.0 93.1,186.6 93.6,186.2 94.1,185.6 94.6,185.1 95.1,184.3 95.6,183.4 96.1,182.5 96.6,181.5 97.1,180.5 97.6,179.5 98.1,178.4 98.6,177.3 99.1,176.4 99.6,175.7 100.1,175.0 100.6,174.4 101.1,173.8 101.6,173.5 102.1,173.3 102.6,173.2 103.1,173.1 103.6,173.0 104.1,173.0 104.6,173.0 105.1,173.1 105.6,173.3 106.1,173.6 106.6,174.0 107.1,174.3 107.6,174.6 108.1,174.9 108.6,175.2 109.1,175.5 109.6,175.8 110.1,176.0 110.6,176.1 111.1,176.1 111.6,176.1 112.1,176.0 112.6,175.9 113.1,175.8 113.6,175.7 114.1,175.5 114.6,175.2 115.1,174.7 115.6,174.2 116.1,173.6 116.6,173.1 117.1,172.7 117.6,172.4 118.1,172.0 118.6,171.7 119.1,171.5 119.6,171.3 120.1,171.2 120.6,171.2 121.1,171.4 121.6,171.7 122.1,172.1 122.6,172.5 123.1,173.1 123.6,174.1 124.1,175.5 124.6,177.1 125.1,179.4 125.6,182.3 126.1,185.1 126.6,187.9 127.1,191.0 127.6,194.3 128.1,198.0 128.6,202.2 129.1,207.1 129.6,211.8 130.1,216.3 130.6,220.8 131.1,225.1 131.6,229.4 132.1,233.6 132.6,237.6 133.1,241.6 133.6,245.3 134.1,248.9 134.6,252.6 135.1,256.4 135.6,260.3 136.1,263.9 136.6,267.2 137.1,270.3 137.6,273.1 138.1,275.8 138.6,278.4 139.1,280.8 139.6,283.0 140.1,284.8 140.6,286.5 141.1,288.1 141.6,289.4 142.1,290.4 142.6,291.2 143.1,292.0 143.6,292.6 144.1,293.0 144.6,293.1 145.1,292.8 145.6,292.3 146.1,291.5 146.6,290.7 147.1,289.9 147.6,288.7 148.1,287.4 148.6,286.0 149.1,284.6 149.6,283.3 150.1,282.1 150.6,280.8 151.1,279.5 151.6,278.3 152.1,277.1 152.6,275.8 153.1,274.6 153.6,273.4 154.1,272.4 154.6,271.6 155.1,270.9 155.6,270.3 156.1,269.7 156.6,269.1 157.1,268.7 157.6,268.2 158.1,267.8 158.6,267.4 159.1,267.1 159.6,266.8 160.1,266.5 160.6,266.2 161.1,265.9 161.6,265.6 162.1,265.4 162.6,265.1 163.1,264.8 163.6,264.5 164.1,264.4 164.6,264.2 165.1,264.2 165.6,264.2 166.1,264.2 166.6,264.2 167.1,264.2 167.6,264.2 168.1,264.2 168.6,264.3 169.1,264.6 169.6,265.0 170.1,265.6 170.6,266.2 171.1,266.9 171.6,267.5 172.1,268.2 172.6,269.1 173.1,270.0 173.6,271.0 174.1,271.9 174.6,272.9 175.1,273.9 175.6,275.0 176.1,276.1 176.6,277.2 177.1,278.2 177.6,279.0 178.1,279.7 178.6,280.4 179.1,281.1 179.6,281.8 180.1,282.3 180.6,282.6 181.1,282.8 181.6,282.7 182.1,282.4 182.6,281.8 183.1,281.1 183.6,280.3 184.1,279.2 184.6,277.1 185.1,274.4 185.6,271.6 186.1,268.4 186.6,265.0 187.1,261.4 187.6,257.7 188.1,253.8 188.6,250.1 189.1,246.9 189.6,243.9 190.1,240.7 190.6,237.0 191.1,233.1 191.6,229.0 192.1,224.6 192.6,220.0 193.1,215.1 193.6,210.0 194.1,200.4 194.6,194.0 195.1,189.0 195.6,184.8 196.1,181.1 196.6,177.6 197.1,174.0 197.6,170.7 198.1,167.8 198.6,165.1 199.1,162.8 199.6,161.4 200.1,160.4 200.6,159.4 201.1,158.6 201.6,158.0 202.1,157.6 202.6,157.4 203.1,157.5 203.6,158.0 204.1,158.8 204.6,159.7 205.1,160.7 205.6,161.9 206.1,163.7 206.6,165.7 207.1,167.6 207.6,169.5 208.1,171.4 208.6,173.2 209.1,174.9 209.6,176.5 210.1,178.0 210.6,179.4 211.1,180.7 211.6,181.9 212.1,183.1 212.6,184.1 213.1,184.9 213.6,185.5 214.1,186.1 214.6,186.6 215.1,186.9 215.6,187.2 216.1,187.2 216.6,187.0 217.1,186.6 217.6,186.2 218.1,185.6 218.6,185.1 219.1,184.3 219.6,183.4 220.1,182.5 220.6,181.5 221.1,180.5 221.6,179.5 222.1,178.4 222.6,177.3 223.1,176.4 223.6,175.7 224.1,175.0 224.6,174.4 225.1,173.8 225.6,173.5 226.1,173.3 226.6,173.2 227.1,173.1 227.6,173.0 228.1,173.0 228.6,173.0 229.1,173.1 229.6,173.3 230.1,173.6 230.6,174.0 231.1,174.3 231.6,174.6 232.1,174.9 232.6,175.2 233.1,175.5 233.6,175.8 234.1,176.0 234.6,176.1 235.1,176.1 235.6,176.1 236.1,176.0 236.6,175.9 237.1,175.8 237.6,175.7 238.1,175.5 238.6,175.2 239.1,174.7 239.6,174.2 240.1,173.6 240.6,173.1 241.1,172.7 241.6,172.4 242.1,172.0 242.6,171.7 243.1,171.5 243.6,171.3 244.1,171.2 244.6,171.2 245.1,171.4 245.6,171.7 246.1,172.1 246.6,172.5 247.1,173.1 247.6,174.1 248.1,175.5 248.6,177.1 249.1,179.4 249.6,182.3 250.1,185.1 250.6,187.9 251.1,191.0 251.6,194.3 252.1,198.0 252.6,202.2 253.1,207.1 253.6,211.8 254.1,216.3 254.6,220.8 255.1,225.1 255.6,229.4 256.1,233.6 256.6,237.6 257.1,241.6 257.6,245.3 258.1,248.9 258.6,252.6 259.1,256.4 259.6,260.3 260.1,263.9 260.6,267.2 261.1,270.3 261.6,273.1 262.1,275.8 262.6,278.4 263.1,280.8 263.6,283.0 264.1,284.8 264.6,286.5 265.1,288.1 265.6,289.4 266.1,290.4 266.6,291.2 267.1,292.0 267.6,292.6 268.1,293.0 268.6,293.1 269.1,292.8 269.6,292.3 270.1,291.5 270.6,290.7 271.1,289.9 271.6,288.7 272.1,287.4 272.6,286.0 273.1,284.6 273.6,283.3 274.1,282.1 274.6,280.8 275.1,279.5 275.6,278.3 276.1,277.1 276.6,275.8 277.1,274.6 277.6,273.4 278.1,272.4 278.6,271.6 279.1,270.9 279.6,270.3 280.1,269.7 280.6,269.1 281.1,268.7 281.6,268.2 282.1,267.8 282.6,267.4 283.1,267.1 283.6,266.8 284.1,266.5 284.6,266.2 285.1,265.9 285.6,265.6 286.1,265.4 286.6,265.1 287.1,264.8 287.6,264.5 288.1,264.4 288.6,264.2 289.1,264.2 289.6,264.2 290.1,264.2 290.6,264.2 291.1,264.2 291.6,264.2 292.1,264.2 292.6,264.3 293.1,264.6 293.6,265.0 294.1,265.6 294.6,266.2 295.1,266.9 295.6,267.5 296.1,268.2 296.6,269.1 297.1,270.0 297.6,271.0 298.1,271.9 298.6,272.9 299.1,273.9 299.6,275.0 300.1,276.1 300.6,277.2 301.1,278.2 301.6,279.0 302.1,279.7 302.6,280.4 303.1,281.1 303.6,281.8 304.1,282.3 304.6,282.6 305.1,282.8 305.6,282.7 306.1,282.4 306.6,281.8 307.1,281.1 307.6,280.3 308.1,279.2 308.6,277.1 309.1,274.4 309.6,271.6 310.1,268.4 310.6,265.0 311.1,261.4 311.6,257.7 312.1,253.8 312.6,250.1 313.1,246.9 313.6,243.9 314.1,240.7 314.6,237.0 315.1,233.1 315.6,229.0 316.1,224.6 316.6,220.0 317.1,215.1 317.6,210.0 318.1,200.4 318.6,194.0 319.1,189.0 319.6,184.8 320.1,181.1 320.6,177.6 321.1,174.0 321.6,170.7 322.1,167.8 322.6,165.1 323.1,162.8 323.6,161.4 324.1,160.4 324.6,159.4 325.1,158.6 325.6,158.0 326.1,157.6 326.6,157.4 327.1,157.5 327.6,158.0 328.1,158.8 328.6,159.7 329.1,160.7 329.6,161.9 330.1,163.7 330.6,165.7 331.1,167.6 331.6,169.5 332.1,171.4 332.6,173.2 333.1,174.9 333.6,176.5 334.1,178.0 334.6,179.4 335.1,180.7 335.6,181.9 336.1,183.1 336.6,184.1 337.1,184.9 337.6,185.5 338.1,186.1 338.6,186.6 339.1,186.9 339.6,187.2 340.1,187.2 340.6,187.0 341.1,186.6 341.6,186.2 342.1,185.6 342.6,185.1 343.1,184.3 343.6,183.4 344.1,182.5 344.6,181.5 345.1,180.5 345.6,179.5 346.1,178.4 346.6,177.3 347.1,176.4 347.6,175.7 348.1,175.0 348.6,174.4 349.1,173.8 349.6,173.5 350.1,173.3 350.6,173.2 351.1,173.1 351.6,173.0 352.1,173.0 352.6,173.0 353.1,173.1 353.6,173.3 354.1,173.6 354.6,174.0 355.1,174.3 355.6,174.6 356.1,174.9 356.6,175.2 357.1,175.5 357.6,175.8 358.1,176.0 358.6,176.1 359.1,176.1 359.6,176.1 360.1,176.0 360.6,175.9 361.1,175.8 361.6,175.7 362.1,175.5 362.6,175.2 363.1,174.7 363.6,174.2 364.1,173.6 364.6,173.1 365.1,172.7 365.6,172.4 366.1,172.0 366.6,171.7 367.1,171.5 367.6,171.3 368.1,171.2 368.6,171.2 369.1,171.4 369.6,171.7 370.1,172.1 370.6,172.5 371.1,173.1 371.6,174.1 372.1,175.5 372.6,177.1 373.1,179.4 373.6,182.3 374.1,185.1 374.6,187.9 375.1,191.0 375.6,194.3 376.1,198.0 376.6,202.2 377.1,207.1 377.6,211.8 378.1,216.3 378.6,220.8 379.1,225.1 379.6,229.4 380.1,233.6 380.6,237.6 381.1,241.6 381.6,245.3 382.1,248.9 382.6,252.6 383.1,256.4 383.6,260.3 384.1,263.9 384.6,267.2 385.1,270.3 385.6,273.1 386.1,275.8 386.6,278.4 387.1,280.8 387.6,283.0 388.1,284.8 388.6,286.5 389.1,288.1 389.6,289.4 390.1,290.4 390.6,291.2 391.1,292.0 391.6,292.6 392.1,293.0 392.6,293.1 393.1,292.8 393.6,292.3 394.1,291.5 394.6,290.7 395.1,289.9 395.6,288.7 396.1,287.4 396.6,286.0 397.1,284.6 397.6,283.3 398.1,282.1 398.6,280.8 399.1,279.5 399.6,278.3 400.1,277.1 400.6,275.8 401.1,274.6 401.6,273.4 402.1,272.4 402.6,271.6 403.1,270.9 403.6,270.3 404.1,269.7 404.6,269.1 405.1,268.7 405.6,268.2 406.1,267.8 406.6,267.4 407.1,267.1 407.6,266.8 408.1,266.5 408.6,266.2 409.1,265.9 409.6,265.6 410.1,265.4 410.6,265.1 411.1,264.8 411.6,264.5 412.1,264.4 412.6,264.2 413.1,264.2 413.6,264.2 414.1,264.2 414.6,264.2 415.1,264.2 415.6,264.2 416.1,264.2 416.6,264.3 417.1,264.6 417.6,265.0 418.1,265.6 418.6,266.2 419.1,266.9 419.6,267.5 420.1,268.2 420.6,269.1 421.1,270.0 421.6,271.0 422.1,271.9 422.6,272.9 423.1,273.9 423.6,275.0 424.1,276.1 424.6,277.2 425.1,278.2 425.6,279.0 426.1,279.7 426.6,280.4 427.1,281.1 427.6,281.8 428.1,282.3 428.6,282.6 429.1,282.8 429.6,282.7 430.1,282.4 430.6,281.8 431.1,281.1 431.6,280.3 432.1,279.2 432.6,277.1 433.1,274.4 433.6,271.6 434.1,268.4 434.6,265.0 435.1,261.4 435.6,257.7 436.1,253.8 436.6,250.1 437.1,246.9 437.6,243.9 438.1,240.7 438.6,237.0 439.1,233.1 439.6,229.0 440.1,224.6 440.6,220.0 441.1,215.1 441.6,210.0 442.1,200.4 442.6,194.0 443.1,189.0 443.6,184.8 444.1,181.1 444.6,177.6 445.1,174.0 445.6,170.7 446.1,167.8 446.6,165.1 447.1,162.8 447.6,161.4 448.1,160.4 448.6,159.4 449.1,158.6 449.6,158.0 450.1,157.6 450.6,157.4 451.1,157.5 451.6,158.0 452.1,158.8 452.6,159.7 453.1,160.7 453.6,161.9 454.1,163.7 454.6,165.7 455.1,167.6 455.6,169.5 456.1,171.4 456.6,173.2 457.1,174.9 457.6,176.5 458.1,178.0 458.6,179.4 459.1,180.7 459.6,181.9 460.1,183.1 460.6,184.1 461.1,184.9 461.6,185.5 462.1,186.1 462.6,186.6 463.1,186.9 463.6,187.2 464.1,187.2 464.6,187.0 465.1,186.6 465.6,186.2 466.1,185.6 466.6,185.1 467.1,184.3 467.6,183.4 468.1,182.5 468.6,181.5 469.1,180.5 469.6,179.5 470.1,178.4 470.6,177.3 471.1,176.4 471.6,175.7 472.1,175.0 472.6,174.4 473.1,173.8 473.6,173.5 474.1,173.3 474.6,173.2 475.1,173.1 475.6,173.0 476.1,173.0 476.6,173.0 477.1,173.1 477.6,173.3 478.1,173.6 478.6,174.0 479.1,174.3 479.6,174.6 480.1,174.9 480.6,175.2 481.1,175.5 481.6,175.8 482.1,176.0 482.6,176.1 483.1,176.1 483.6,176.1 484.1,176.0 484.6,175.9 485.1,175.8 485.6,175.7 486.1,175.5 486.6,175.2 487.1,174.7 487.6,174.2 488.1,173.6 488.6,173.1 489.1,172.7 489.6,172.4 490.1,172.0 490.6,171.7 491.1,171.5 491.6,171.3 492.1,171.2 492.6,171.2 493.1,171.4 493.6,171.7 494.1,172.1 494.6,172.5 495.1,173.1 495.6,174.1 496.1,175.5 496.6,177.1 497.1,179.4 497.6,182.3 498.1,185.1 498.6,187.9 499.1,191.0 499.6,194.3 500.1,198.0 500.6,202.2 501.1,207.1 501.6,211.8 502.1,216.3 502.6,220.8 503.1,225.1 503.6,229.4 504.1,233.6 504.6,237.6 505.1,241.6 505.6,245.3 506.1,248.9 506.6,252.6 507.1,256.4 507.6,260.3 508.1,263.9 508.6,267.2 509.1,270.3 509.6,273.1 510.1,275.8 510.6,278.4 511.1,280.8 511.6,283.0 512.1,284.8 512.6,286.5 513.1,288.1 513.6,289.4 514.1,290.4 514.6,291.2 515.1,292.0 515.6,292.6 516.1,293.0 516.6,293.1 517.1,292.8 517.6,292.3 518.1,291.5 518.6,290.7 519.1,289.9 519.6,288.7 520.1,287.4 520.6,286.0 521.1,284.6 521.6,283.3 522.1,282.1 522.6,280.8 523.1,279.5 523.6,278.3 524.1,277.1 524.6,275.8 525.1,274.6 525.6,273.4 526.1,272.4 526.6,271.6 527.1,270.9 527.6,270.3 528.1,269.7 528.6,269.1 529.1,268.7 529.6,268.2 530.1,267.8 530.6,267.4 531.1,267.1 531.6,266.8 532.1,266.5 532.6,266.2 533.1,265.9 533.6,265.6 534.1,265.4 534.6,265.1 535.1,264.8 535.6,264.5 536.1,264.4 536.6,264.2 537.1,264.2 537.6,264.2 538.1,264.2 538.6,264.2 539.1,264.2 539.6,264.2 540.1,264.2 540.6,264.3 541.1,264.6 541.6,265.0 542.1,265.6 542.6,266.2 543.1,266.9 543.6,267.5 544.1,268.2 544.6,269.1 545.1,270.0 545.6,271.0 546.1,271.9 546.6,272.9 547.1,273.9 547.6,275.0 548.1,276.1 548.6,277.2 549.1,278.2 549.6,279.0 550.1,279.7 550.6,280.4 551.1,281.1 551.6,281.8 552.1,282.3 552.6,282.6 553.1,282.8 553.6,282.7 554.1,282.4 554.6,281.8 555.1,281.1 555.6,280.3 556.1,279.2 556.6,277.1 557.1,274.4 557.6,271.6 558.1,268.4 558.6,265.0 559.1,261.4 559.6,257.7 560.1,253.8 560.6,250.1 561.1,246.9 561.6,243.9 562.1,240.7 562.6,237.0 563.1,233.1 563.6,229.0 564.1,224.6 564.6,220.0 565.1,215.1 565.6,210.0 566.1,200.4 566.6,194.0 567.1,189.0 567.6,184.8 568.1,181.1 568.6,177.6 569.1,174.0 569.6,170.7 570.1,167.8 570.6,165.1 571.1,162.8 571.6,161.4 572.1,160.4 572.6,159.4 573.1,158.6 573.6,158.0 574.1,157.6 574.6,157.4 575.1,157.5 575.6,158.0 576.1,158.8 576.6,159.7 577.1,160.7 577.6,161.9 578.1,163.7 578.6,165.7 579.1,167.6 579.6,169.5 580.1,171.4 580.6,173.2 581.1,174.9 581.6,176.5 582.1,178.0 582.6,179.4 583.1,180.7 583.6,181.9 584.1,183.1 584.6,184.1 585.1,184.9 585.6,185.5 586.1,186.1 586.6,186.6 587.1,186.9 587.6,187.2 588.1,187.2 588.6,187.0 589.1,186.6 589.6,186.2 590.1,185.6 590.6,185.1 591.1,184.3 591.6,183.4 592.1,182.5 592.6,181.5 593.1,180.5 593.6,179.5 594.1,178.4 594.6,177.3 595.1,176.4 595.6,175.7 596.1,175.0 596.6,174.4 597.1,173.8 597.6,173.5 598.1,173.3 598.6,173.2 599.1,173.1 599.6,173.0 600.1,173.0 600.6,173.0 601.1,173.1 601.6,173.3 602.1,173.6 602.6,174.0 603.1,174.3 603.6,174.6 604.1,174.9 604.6,175.2 605.1,175.5 605.6,175.8 606.1,176.0 606.6,176.1 607.1,176.1 607.6,176.1 608.1,176.0 608.6,175.9 609.1,175.8 609.6,175.7 610.1,175.5 610.6,175.2 611.1,174.7 611.6,174.2 612.1,173.6 612.6,173.1 613.1,172.7 613.6,172.4 614.1,172.0 614.6,171.7 615.1,171.5 615.6,171.3 616.1,171.2 616.6,171.2 617.1,171.4 617.6,171.7 618.1,172.1 618.6,172.5 619.1,173.1 619.6,174.1 620.1,175.5 620.6,177.1 621.1,179.4 621.6,182.3 622.1,185.1 622.6,187.9 623.1,191.0 623.6,194.3 624.1,198.0 624.6,202.2 625.1,207.1 625.6,211.8 626.1,216.3 626.6,220.8 627.1,225.1 627.6,229.4 628.1,233.6 628.6,237.6 629.1,241.6 629.6,245.3 630.1,248.9 630.6,252.6 631.1,256.4 631.6,260.3 632.1,263.9 632.6,267.2" fill="none" stroke="#00cc00" stroke-width="1.4" stroke-linejoin="round"/>
<polyline points="14.6,127.4 15.1,132.4 15.6,136.7 16.1,141.0 16.6,145.7 17.1,151.0 17.6,156.2 18.1,160.9 18.6,164.9 19.1,168.8 19.6,172.6 20.1,176.6 20.6,180.7 21.1,184.7 21.6,188.4 22.1,192.0 22.6,195.4 23.1,198.6 23.6,201.4 24.1,204.1 24.6,206.5 25.1,208.5 25.6,209.9 26.1,211.2 26.6,212.3 27.1,213.2 27.6,213.8 28.1,213.6 28.6,212.9 29.1,212.1 29.6,211.1 30.1,210.1 30.6,208.7 31.1,207.2 31.6,205.5 32.1,203.9 32.6,202.3 33.1,200.8 33.6,199.3 34.1,197.8 34.6,196.3 35.1,194.9 35.6,193.4 36.1,191.9 36.6,190.4 37.1,189.0 37.6,187.6 38.1,186.1 38.6,184.6 39.1,183.1 39.6,181.8 40.1,180.7 40.6,179.8 41.1,178.9 41.6,178.1 42.1,177.5 42.6,177.0 43.1,176.5 43.6,176.2 44.1,175.8 44.6,175.5 45.1,175.3 45.6,175.1 46.1,175.0 46.6,174.9 47.1,174.9 47.6,174.8 48.1,174.7 48.6,174.7 49.1,174.6 49.6,174.6 50.1,174.5 50.6,174.5 51.1,174.5 51.6,174.5 52.1,174.5 52.6,174.6 53.1,174.7 53.6,174.8 54.1,174.9 54.6,175.0 55.1,175.2 55.6,175.4 56.1,175.6 56.6,175.8 57.1,176.1 57.6,176.5 58.1,177.0 58.6,177.6 59.1,178.2 59.6,178.8 60.1,179.4 60.6,180.1 61.1,180.8 61.6,181.5 62.1,182.3 62.6,182.9 63.1,183.5 63.6,183.9 64.1,184.3 64.6,184.6 65.1,184.9 65.6,185.1 66.1,185.2 66.6,185.1 67.1,184.8 67.6,184.3 68.1,183.6 68.6,182.9 69.1,181.9 69.6,180.5 70.1,178.7 70.6,175.8 71.1,172.3 71.6,169.1 72.1,166.1 72.6,163.6 73.1,161.9 73.6,160.0 74.1,155.6 74.6,149.6 75.1,144.0 75.6,138.2 76.1,132.9 76.6,128.6 77.1,124.9 77.6,121.0 78.1,116.4 78.6,111.5 79.1,106.6 79.6,101.2 80.1,93.9 80.6,86.0 81.1,78.9 81.6,74.3 82.1,70.9 82.6,67.7 83.1,64.7 83.6,62.1 84.1,59.8 84.6,57.6 85.1,56.0 85.6,54.9 86.1,54.0 86.6,53.3 87.1,52.9 87.6,53.1 88.1,53.9 88.6,54.9 89.1,56.0 89.6,57.3 90.1,58.9 90.6,60.6 91.1,62.6 91.6,64.8 92.1,67.1 92.6,69.5 93.1,71.7 93.6,74.1 94.1,76.4 94.6,78.7 95.1,81.1 95.6,83.5 96.1,85.7 96.6,87.9 97.1,90.1 97.6,92.2 98.1,93.9 98.6,95.2 99.1,96.4 99.6,97.3 100.1,97.9 100.6,98.3 101.1,98.7 101.6,98.8 102.1,98.6 102.6,98.1 103.1,97.3 103.6,96.5 104.1,95.7 104.6,94.7 105.1,93.6 105.6,92.4 106.1,91.1 106.6,89.9 107.1,88.6 107.6,87.2 108.1,85.9 108.6,84.7 109.1,83.7 109.6,82.8 110.1,81.9 110.6,81.1 111.1,80.5 111.6,80.2 112.1,79.9 112.6,79.6 113.1,79.4 113.6,79.3 114.1,79.3 114.6,79.4 115.1,79.6 115.6,79.8 116.1,80.1 116.6,80.4 117.1,80.7 117.6,81.1 118.1,81.6 118.6,82.1 119.1,82.5 119.6,82.9 120.1,83.4 120.6,83.8 121.1,84.0 121.6,84.1 122.1,84.1 122.6,84.1 123.1,84.1 123.6,84.1 124.1,84.1 124.6,84.1 125.1,84.1 125.6,84.0 126.1,84.0 126.6,83.9 127.1,83.9 127.6,83.8 128.1,83.7 128.6,83.7 129.1,83.7 129.6,83.9 130.1,84.4 130.6,85.0 131.1,85.7 131.6,86.6 132.1,88.1 132.6,89.8 133.1,91.3 133.6,93.0 134.1,94.7 134.6,96.5 135.1,98.5 135.6,101.3 136.1,105.9 136.6,110.9 137.1,114.9 137.6,118.3 138.1,122.3 138.6,127.4 139.1,132.4 139.6,136.7 140.1,141.0 140.6,145.7 141.1,151.0 141.6,156.2 142.1,160.9 142.6,164.9 143.1,168.8 143.6,172.6 144.1,176.6 144.6,180.7 145.1,184.7 145.6,188.4 146.1,192.0 146.6,195.4 147.1,198.6 147.6,201.4 148.1,204.1 148.6,206.5 149.1,208.5 149.6,209.9 150.1,211.2 150.6,212.3 151.1,213.2 151.6,213.8 152.1,213.6 152.6,212.9 153.1,212.1 153.6,211.1 154.1,210.1 154.6,208.7 155.1,207.2 155.6,205.5 156.1,203.9 156.6,202.3 157.1,200.8 157.6,199.3 158.1,197.8 158.6,196.3 159.1,194.9 159.6,193.4 160.1,191.9 160.6,190.4 161.1,189.0 161.6,187.6 162.1,186.1 162.6,184.6 163.1,183.1 163.6,181.8 164.1,180.7 164.6,179.8 165.1,178.9 165.6,178.1 166.1,177.5 166.6,177.0 167.1,176.5 167.6,176.2 168.1,175.8 168.6,175.5 169.1,175.3 169.6,175.1 170.1,175.0 170.6,174.9 171.1,174.9 171.6,174.8 172.1,174.7 172.6,174.7 173.1,174.6 173.6,174.6 174.1,174.5 174.6,174.5 175.1,174.5 175.6,174.5 176.1,174.5 176.6,174.6 177.1,174.7 177.6,174.8 178.1,174.9 178.6,175.0 179.1,175.2 179.6,175.4 180.1,175.6 180.6,175.8 181.1,176.1 181.6,176.5 182.1,177.0 182.6,177.6 183.1,178.2 183.6,178.8 184.1,179.4 184.6,180.1 185.1,180.8 185.6,181.5 186.1,182.3 186.6,182.9 187.1,183.5 187.6,183.9 188.1,184.3 188.6,184.6 189.1,184.9 189.6,185.1 190.1,185.2 190.6,185.1 191.1,184.8 191.6,184.3 192.1,183.6 192.6,182.9 193.1,181.9 193.6,180.5 194.1,178.7 194.6,175.8 195.1,172.3 195.6,169.1 196.1,166.1 196.6,163.6 197.1,161.9 197.6,160.0 198.1,155.6 198.6,149.6 199.1,144.0 199.6,138.2 200.1,132.9 200.6,128.6 201.1,124.9 201.6,121.0 202.1,116.4 202.6,111.5 203.1,106.6 203.6,101.2 204.1,93.9 204.6,86.0 205.1,78.9 205.6,74.3 206.1,70.9 206.6,67.7 207.1,64.7 207.6,62.1 208.1,59.8 208.6,57.6 209.1,56.0 209.6,54.9 210.1,54.0 210.6,53.3 211.1,52.9 211.6,53.1 212.1,53.9 212.6,54.9 213.1,56.0 213.6,57.3 214.1,58.9 214.6,60.6 215.1,62.6 215.6,64.8 216.1,67.1 216.6,69.5 217.1,71.7 217.6,74.1 218.1,76.4 218.6,78.7 219.1,81.1 219.6,83.5 220.1,85.7 220.6,87.9 221.1,90.1 221.6,92.2 222.1,93.9 222.6,95.2 223.1,96.4 223.6,97.3 224.1,97.9 224.6,98.3 225.1,98.7 225.6,98.8 226.1,98.6 226.6,98.1 227.1,97.3 227.6,96.5 228.1,95.7 228.6,94.7 229.1,93.6 229.6,92.4 230.1,91.1 230.6,89.9 231.1,88.6 231.6,87.2 232.1,85.9 232.6,84.7 233.1,83.7 233.6,82.8 234.1,81.9 234.6,81.1 235.1,80.5 235.6,80.2 236.1,79.9 236.6,79.6 237.1,79.4 237.6,79.3 238.1,79.3 238.6,79.4 239.1,79.6 239.6,79.8 240.1,80.1 240.6,80.4 241.1,80.7 241.6,81.1 242.1,81.6 242.6,82.1 243.1,82.5 243.6,82.9 244.1,83.4 244.6,83.8 245.1,84.0 245.6,84.1 246.1,84.1 246.6,84.1 247.1,84.1 247.6,84.1 248.1,84.1 248.6,84.1 249.1,84.1 249.6,84.0 250.1,84.0 250.6,83.9 251.1,83.9 251.6,83.8 252.1,83.7 252.6,83.7 253.1,83.7 253.6,83.9 254.1,84.4 254.6,85.0 255.1,85.7 255.6,86.6 256.1,88.1 256.6,89.8 257.1,91.3 257.6,93.0 258.1,94.7 258.6,96.5 259.1,98.5 259.6,101.3 260.1,105.9 260.6,110.9 261.1,114.9 261.6,118.3 262.1,122.3 262.6,127.4 263.1,132.4 263.6,136.7 264.1,141.0 264.6,145.7 265.1,151.0 265.6,156.2 266.1,160.9 266.6,164.9 267.1,168.8 267.6,172.6 268.1,176.6 268.6,180.7 269.1,184.7 269.6,188.4 270.1,192.0 270.6,195.4 271.1,198.6 271.6,201.4 272.1,204.1 272.6,206.5 273.1,208.5 273.6,209.9 274.1,211.2 274.6,212.3 275.1,213.2 275.6,213.8 276.1,213.6 276.6,212.9 277.1,212.1 277.6,211.1 278.1,210.1 278.6,208.7 279.1,207.2 279.6,205.5 280.1,203.9 280.6,202.3 281.1,200.8 281.6,199.3 282.1,197.8 282.6,196.3 283.1,194.9 283.6,193.4 284.1,191.9 284.6,190.4 285.1,189.0 285.6,187.6 286.1,186.1 286.6,184.6 287.1,183.1 287.6,181.8 288.1,180.7 288.6,179.8 289.1,178.9 289.6,178.1 290.1,177.5 290.6,177.0 291.1,176.5 291.6,176.2 292.1,175.8 292.6,175.5 293.1,175.3 293.6,175.1 294.1,175.0 294.6,174.9 295.1,174.9 295.6,174.8 296.1,174.7 296.6,174.7 297.1,174.6 297.6,174.6 298.1,174.5 298.6,174.5 299.1,174.5 299.6,174.5 300.1,174.5 300.6,174.6 301.1,174.7 301.6,174.8 302.1,174.9 302.6,175.0 303.1,175.2 303.6,175.4 304.1,175.6 304.6,175.8 305.1,176.1 305.6,176.5 306.1,177.0 306.6,177.6 307.1,178.2 307.6,178.8 308.1,179.4 308.6,180.1 309.1,180.8 309.6,181.5 310.1,182.3 310.6,182.9 311.1,183.5 311.6,183.9 312.1,184.3 312.6,184.6 313.1,184.9 313.6,185.1 314.1,185.2 314.6,185.1 315.1,184.8 315.6,184.3 316.1,183.6 316.6,182.9 317.1,181.9 317.6,180.5 318.1,178.7 318.6,175.8 319.1,172.3 319.6,169.1 320.1,166.1 320.6,163.6 321.1,161.9 321.6,160.0 322.1,155.6 322.6,149.6 323.1,144.0 323.6,138.2 324.1,132.9 324.6,128.6 325.1,124.9 325.6,121.0 326.1,116.4 326.6,111.5 327.1,106.6 327.6,101.2 328.1,93.9 328.6,86.0 329.1,78.9 329.6,74.3 330.1,70.9 330.6,67.7 331.1,64.7 331.6,62.1 332.1,59.8 332.6,57.6 333.1,56.0 333.6,54.9 334.1,54.0 334.6,53.3 335.1,52.9 335.6,53.1 336.1,53.9 336.6,54.9 337.1,56.0 337.6,57.3 338.1,58.9 338.6,60.6 339.1,62.6 339.6,64.8 340.1,67.1 340.6,69.5 341.1,71.7 341.6,74.1 342.1,76.4 342.6,78.7 343.1,81.1 343.6,83.5 344.1,85.7 344.6,87.9 345.1,90.1 345.6,92.2 346.1,93.9 346.6,95.2 347.1,96.4 347.6,97.3 348.1,97.9 348.6,98.3 349.1,98.7 349.6,98.8 350.1,98.6 350.6,98.1 351.1,97.3 351.6,96.5 352.1,95.7 352.6,94.7 353.1,93.6 353.6,92.4 354.1,91.1 354.6,89.9 355.1,88.6 355.6,87.2 356.1,85.9 356.6,84.7 357.1,83.7 357.6,82.8 358.1,81.9 358.6,81.1 359.1,80.5 359.6,80.2 360.1,79.9 360.6,79.6 361.1,79.4 361.6,79.3 362.1,79.3 362.6,79.4 363.1,79.6 363.6,79.8 364.1,80.1 364.6,80.4 365.1,80.7 365.6,81.1 366.1,81.6 366.6,82.1 367.1,82.5 367.6,82.9 368.1,83.4 368.6,83.8 369.1,84.0 369.6,84.1 370.1,84.1 370.6,84.1 371.1,84.1 371.6,84.1 372.1,84.1 372.6,84.1 373.1,84.1 373.6,84.0 374.1,84.0 374.6,83.9 375.1,83.9 375.6,83.8 376.1,83.7 376.6,83.7 377.1,83.7 377.6,83.9 378.1,84.4 378.6,85.0 379.1,85.7 379.6,86.6 380.1,88.1 380.6,89.8 381.1,91.3 381.6,93.0 382.1,94.7 382.6,96.5 383.1,98.5 383.6,101.3 384.1,105.9 384.6,110.9 385.1,114.9 385.6,118.3 386.1,122.3 386.6,127.4 387.1,132.4 387.6,136.7 388.1,141.0 388.6,145.7 389.1,151.0 389.6,156.2 390.1,160.9 390.6,164.9 391.1,168.8 391.6,172.6 392.1,176.6 392.6,180.7 393.1,184.7 393.6,188.4 394.1,192.0 394.6,195.4 395.1,198.6 395.6,201.4 396.1,204.1 396.6,206.5 397.1,208.5 397.6,209.9 398.1,211.2 398.6,212.3 399.1,213.2 399.6,213.8 400.1,213.6 400.6,212.9 401.1,212.1 401.6,211.1 402.1,210.1 402.6,208.7 403.1,207.2 403.6,205.5 404.1,203.9 404.6,202.3 405.1,200.8 405.6,199.3 406.1,197.8 406.6,196.3 407.1,194.9 407.6,193.4 408.1,191.9 408.6,190.4 409.1,189.0 409.6,187.6 410.1,186.1 410.6,184.6 411.1,183.1 411.6,181.8 412.1,180.7 412.6,179.8 413.1,178.9 413.6,178.1 414.1,177.5 414.6,177.0 415.1,176.5 415.6,176.2 416.1,175.8 416.6,175.5 417.1,175.3 417.6,175.1 418.1,175.0 418.6,174.9 419.1,174.9 419.6,174.8 420.1,174.7 420.6,174.7 421.1,174.6 421.6,174.6 422.1,174.5 422.6,174.5 423.1,174.5 423.6,174.5 424.1,174.5 424.6,174.6 425.1,174.7 425.6,174.8 426.1,174.9 426.6,175.0 427.1,175.2 427.6,175.4 428.1,175.6 428.6,175.8 429.1,176.1 429.6,176.5 430.1,177.0 430.6,177.6 431.1,178.2 431.6,178.8 432.1,179.4 432.6,180.1 433.1,180.8 433.6,181.5 434.1,182.3 434.6,182.9 435.1,183.5 435.6,183.9 436.1,184.3 436.6,184.6 437.1,184.9 437.6,185.1 438.1,185.2 438.6,185.1 439.1,184.8 439.6,184.3 440.1,183.6 440.6,182.9 441.1,181.9 441.6,180.5 442.1,178.7 442.6,175.8 443.1,172.3 443.6,169.1 444.1,166.1 444.6,163.6 445.1,161.9 445.6,160.0 446.1,155.6 446.6,149.6 447.1,144.0 447.6,138.2 448.1,132.9 448.6,128.6 449.1,124.9 449.6,121.0 450.1,116.4 450.6,111.5 451.1,106.6 451.6,101.2 452.1,93.9 452.6,86.0 453.1,78.9 453.6,74.3 454.1,70.9 454.6,67.7 455.1,64.7 455.6,62.1 456.1,59.8 456.6,57.6 457.1,56.0 457.6,54.9 458.1,54.0 458.6,53.3 459.1,52.9 459.6,53.1 460.1,53.9 460.6,54.9 461.1,56.0 461.6,57.3 462.1,58.9 462.6,60.6 463.1,62.6 463.6,64.8 464.1,67.1 464.6,69.5 465.1,71.7 465.6,74.1 466.1,76.4 466.6,78.7 467.1,81.1 467.6,83.5 468.1,85.7 468.6,87.9 469.1,90.1 469.6,92.2 470.1,93.9 470.6,95.2 471.1,96.4 471.6,97.3 472.1,97.9 472.6,98.3 473.1,98.7 473.6,98.8 474.1,98.6 474.6,98.1 475.1,97.3 475.6,96.5 476.1,95.7 476.6,94.7 477.1,93.6 477.6,92.4 478.1,91.1 478.6,89.9 479.1,88.6 479.6,87.2 480.1,85.9 480.6,84.7 481.1,83.7 481.6,82.8 482.1,81.9 482.6,81.1 483.1,80.5 483.6,80.2 484.1,79.9 484.6,79.6 485.1,79.4 485.6,79.3 486.1,79.3 486.6,79.4 487.1,79.6 487.6,79.8 488.1,80.1 488.6,80.4 489.1,80.7 489.6,81.1 490.1,81.6 490.6,82.1 491.1,82.5 491.6,82.9 492.1,83.4 492.6,83.8 493.1,84.0 493.6,84.1 494.1,84.1 494.6,84.1 495.1,84.1 495.6,84.1 496.1,84.1 496.6,84.1 497.1,84.1 497.6,84.0 498.1,84.0 498.6,83.9 499.1,83.9 499.6,83.8 500.1,83.7 500.6,83.7 501.1,83.7 501.6,83.9 502.1,84.4 502.6,85.0 503.1,85.7 503.6,86.6 504.1,88.1 504.6,89.8 505.1,91.3 505.6,93.0 506.1,94.7 506.6,96.5 507.1,98.5 507.6,101.3 508.1,105.9 508.6,110.9 509.1,114.9 509.6,118.3 510.1,122.3 510.6,127.4 511.1,132.4 511.6,136.7 512.1,141.0 512.6,145.7 513.1,151.0 513.6,156.2 514.1,160.9 514.6,164.9 515.1,168.8 515.6,172.6 516.1,176.6 516.6,180.7 517.1,184.7 517.6,188.4 518.1,192.0 518.6,195.4 519.1,198.6 519.6,201.4 520.1,204.1 520.6,206.5 521.1,208.5 521.6,209.9 522.1,211.2 522.6,212.3 523.1,213.2 523.6,213.8 524.1,213.6 524.6,212.9 525.1,212.1 525.6,211.1 526.1,210.1 526.6,208.7 527.1,207.2 527.6,205.5 528.1,203.9 528.6,202.3 529.1,200.8 529.6,199.3 530.1,197.8 530.6,196.3 531.1,194.9 531.6,193.4 532.1,191.9 532.6,190.4 533.1,189.0 533.6,187.6 534.1,186.1 534.6,184.6 535.1,183.1 535.6,181.8 536.1,180.7 536.6,179.8 537.1,178.9 537.6,178.1 538.1,177.5 538.6,177.0 539.1,176.5 539.6,176.2 540.1,175.8 540.6,175.5 541.1,175.3 541.6,175.1 542.1,175.0 542.6,174.9 543.1,174.9 543.6,174.8 544.1,174.7 544.6,174.7 545.1,174.6 545.6,174.6 546.1,174.5 546.6,174.5 547.1,174.5 547.6,174.5 548.1,174.5 548.6,174.6 549.1,174.7 549.6,174.8 550.1,174.9 550.6,175.0 551.1,175.2 551.6,175.4 552.1,175.6 552.6,175.8 553.1,176.1 553.6,176.5 554.1,177.0 554.6,177.6 555.1,178.2 555.6,178.8 556.1,179.4 556.6,180.1 557.1,180.8 557.6,181.5 558.1,182.3 558.6,182.9 559.1,183.5 559.6,183.9 560.1,184.3 560.6,184.6 561.1,184.9 561.6,185.1 562.1,185.2 562.6,185.1 563.1,184.8 563.6,184.3 564.1,183.6 564.6,182.9 565.1,181.9 565.6,180.5 566.1,178.7 566.6,175.8 567.1,172.3 567.6,169.1 568.1,166.1 568.6,163.6 569.1,161.9 569.6,160.0 570.1,155.6 570.6,149.6 571.1,144.0 571.6,138.2 572.1,132.9 572.6,128.6 573.1,124.9 573.6,121.0 574.1,116.4 574.6,111.5 575.1,106.6 575.6,101.2 576.1,93.9 576.6,86.0 577.1,78.9 577.6,74.3 578.1,70.9 578.6,67.7 579.1,64.7 579.6,62.1 580.1,59.8 580.6,57.6 581.1,56.0 581.6,54.9 582.1,54.0 582.6,53.3 583.1,52.9 583.6,53.1 584.1,53.9 584.6,54.9 585.1,56.0 585.6,57.3 586.1,58.9 586.6,60.6 587.1,62.6 587.6,64.8 588.1,67.1 588.6,69.5 589.1,71.7 589.6,74.1 590.1,76.4 590.6,78.7 591.1,81.1 591.6,83.5 592.1,85.7 592.6,87.9 593.1,90.1 593.6,92.2 594.1,93.9 594.6,95.2 595.1,96.4 595.6,97.3 596.1,97.9 596.6,98.3 597.1,98.7 597.6,98.8 598.1,98.6 598.6,98.1 599.1,97.3 599.6,96.5 600.1,95.7 600.6,94.7 601.1,93.6 601.6,92.4 602.1,91.1 602.6,89.9 603.1,88.6 603.6,87.2 604.1,85.9 604.6,84.7 605.1,83.7 605.6,82.8 606.1,81.9 606.6,81.1 607.1,80.5 607.6,80.2 608.1,79.9 608.6,79.6 609.1,79.4 609.6,79.3 610.1,79.3 610.6,79.4 611.1,79.6 611.6,79.8 612.1,80.1 612.6,80.4 613.1,80.7 613.6,81.1 614.1,81.6 614.6,82.1 615.1,82.5 615.6,82.9 616.1,83.4 616.6,83.8 617.1,84.0 617.6,84.1 618.1,84.1 618.6,84.1 619.1,84.1 619.6,84.1 620.1,84.1 620.6,84.1 621.1,84.1 621.6,84.0 622.1,84.0 622.6,83.9 623.1,83.9 623.6,83.8 624.1,83.7 624.6,83.7 625.1,83.7 625.6,83.9 626.1,84.4 626.6,85.0 627.1,85.7 627.6,86.6 628.1,88.1 628.6,89.8 629.1,91.3 629.6,93.0 630.1,94.7 630.6,96.5 631.1,98.5 631.6,101.3 632.1,105.9 632.6,110.9" fill="none" stroke="#cb00d2" stroke-width="1.4" stroke-linejoin="round"/>
<rect x="14.7" y="417" width="143.7" height="57" rx="7.5" ry="7.5" fill="none" stroke="#9cb2cf" stroke-width="1.5"/>
<rect x="515.2" y="417" width="118.3" height="57" rx="7.5" ry="7.5" fill="none" stroke="#9cb2cf" stroke-width="1.5"/>
<!-- trigger position marker -->
<polygon points="316.9,35.9 331,35.9 327.3,38.4 324.9,42.4 323.1,42.4 320.7,38.4" fill="#ff8c00"/>
<rect x="323.2" y="35.8" width="1.5" height="5" fill="#30d0c0"/>
<!-- T marker -->
<path d="M318,128.6 H325.2 M322.2,128.6 V133.2" stroke="#e010e8" stroke-width="1.8" fill="none"/>
<!-- trigger level arrow -->
<path d="M618.3,118.3 L624,114.8 L624,121.8 Z" fill="#e010e8"/>
<line x1="623" y1="118.3" x2="632" y2="118.3" stroke="#e010e8" stroke-width="1.2"/>
<!-- ch3 marker -->
<line x1="15" y1="128.3" x2="20" y2="128.3" stroke="#e010e8" stroke-width="1.1"/>
<path d="M22,128.3 L18.8,126.7 L18.8,129.9 Z" fill="#e010e8"/>
<!-- ch4 marker -->
<rect x="0" y="217" width="15" height="10.2" fill="#00ff00"/>
<line x1="15" y1="222.2" x2="20" y2="222.2" stroke="#00e000" stroke-width="1.2"/>
<path d="M22,222.2 L18.8,220.6 L18.8,223.8 Z" fill="#00e000"/>
<path d="M549.9,452.6 H552.2 L554.2,447.8 H556.6" stroke="#f0f0f0" stroke-width="1.3" fill="none"/>
<text id="m0" x="5.81" y="13.10" font-family="Liberation Sans, sans-serif" font-size="10.7" fill="#000" textLength="18.63" lengthAdjust="spacingAndGlyphs" stroke="#000" stroke-width="0.45">File</text>
<text id="m1" x="36.37" y="13.10" font-family="Liberation Sans, sans-serif" font-size="10.7" fill="#000" textLength="18.59" lengthAdjust="spacingAndGlyphs" stroke="#000" stroke-width="0.45">Edit</text>
<text id="m2" x="68.16" y="13.10" font-family="Liberation Sans, sans-serif" font-size="10.7" fill="#000" textLength="19.76" lengthAdjust="spacingAndGlyphs" stroke="#000" stroke-width="0.45">Vert</text>
<text id="m3" x="100.10" y="13.10" font-family="Liberation Sans, sans-serif" font-size="10.7" fill="#000" textLength="45.49" lengthAdjust="spacingAndGlyphs" stroke="#000" stroke-width="0.45">Horz/Acq</text>
<text id="m4" x="158.58" y="13.10" font-family="Liberation Sans, sans-serif" font-size="10.7" fill="#000" textLength="19.00" lengthAdjust="spacingAndGlyphs" stroke="#000" stroke-width="0.45">Trig</text>
<text id="m5" x="189.22" y="13.10" font-family="Liberation Sans, sans-serif" font-size="10.7" fill="#000" textLength="37.01" lengthAdjust="spacingAndGlyphs" stroke="#000" stroke-width="0.45">Display</text>
<text id="m6" x="239.05" y="13.10" font-family="Liberation Sans, sans-serif" font-size="10.7" fill="#000" textLength="33.23" lengthAdjust="spacingAndGlyphs" stroke="#000" stroke-width="0.45">Cursor</text>
<text id="m7" x="284.38" y="13.10" font-family="Liberation Sans, sans-serif" font-size="10.7" fill="#000" textLength="27.33" lengthAdjust="spacingAndGlyphs" stroke="#000" stroke-width="0.45">Meas</text>
<text id="m8" x="324.29" y="13.10" font-family="Liberation Sans, sans-serif" font-size="10.7" fill="#000" textLength="26.73" lengthAdjust="spacingAndGlyphs" stroke="#000" stroke-width="0.45">Mask</text>
<text id="m9" x="363.21" y="13.10" font-family="Liberation Sans, sans-serif" font-size="10.7" fill="#000" textLength="25.44" lengthAdjust="spacingAndGlyphs" stroke="#000" stroke-width="0.45">Math</text>
<text id="m10" x="400.77" y="13.10" font-family="Liberation Sans, sans-serif" font-size="10.7" fill="#000" textLength="19.02" lengthAdjust="spacingAndGlyphs" stroke="#000" stroke-width="0.45">App</text>
<text id="m11" x="432.39" y="13.10" font-family="Liberation Sans, sans-serif" font-size="10.7" fill="#000" textLength="45.98" lengthAdjust="spacingAndGlyphs" stroke="#000" stroke-width="0.45">MyScope</text>
<text id="m12" x="491.07" y="13.10" font-family="Liberation Sans, sans-serif" font-size="10.7" fill="#000" textLength="36.40" lengthAdjust="spacingAndGlyphs" stroke="#000" stroke-width="0.45">Utilities</text>
<text id="m13" x="539.37" y="13.10" font-family="Liberation Sans, sans-serif" font-size="10.7" fill="#000" textLength="23.02" lengthAdjust="spacingAndGlyphs" stroke="#000" stroke-width="0.45">Help</text>
<text id="m14" x="575.01" y="13.10" font-family="Liberation Sans, sans-serif" font-size="10.7" fill="#000" textLength="32.60" lengthAdjust="spacingAndGlyphs" stroke="#000" stroke-width="0.45">Button</text>
<text id="s0" x="3.34" y="29.00" font-family="Liberation Sans, sans-serif" font-size="10.3" fill="#ffffff" textLength="16.38" lengthAdjust="spacingAndGlyphs" font-weight="bold">Tek</text>
<text id="s1" x="26.62" y="29.60" font-family="Liberation Sans, sans-serif" font-size="10.4" fill="#a9bad0" textLength="20.35" lengthAdjust="spacingAndGlyphs">Run</text>
<text id="s2" x="70.05" y="29.60" font-family="Liberation Sans, sans-serif" font-size="10.4" fill="#a9bad0" textLength="40.08" lengthAdjust="spacingAndGlyphs">Average</text>
<text id="s3" x="545.01" y="29.70" font-family="Liberation Sans, sans-serif" font-size="11.0" fill="#b7c5d7" textLength="87.32" lengthAdjust="spacingAndGlyphs">28 Jul 25 13:41:09</text>
<text id="p0" x="56.58" y="430.40" font-family="Liberation Sans, sans-serif" font-size="11.0" fill="#e6e6e6" textLength="34.79" lengthAdjust="spacingAndGlyphs">500mV</text>
<text id="p1" x="56.58" y="442.00" font-family="Liberation Sans, sans-serif" font-size="11.0" fill="#e6e6e6" textLength="34.79" lengthAdjust="spacingAndGlyphs">500mV</text>
<text id="p2" x="101.29" y="430.10" font-family="Liberation Serif, serif" font-size="12" fill="#e2e2e2" textLength="8.88" lengthAdjust="spacingAndGlyphs">Ω</text>
<text id="p3" x="101.29" y="441.70" font-family="Liberation Serif, serif" font-size="12" fill="#e2e2e2" textLength="8.88" lengthAdjust="spacingAndGlyphs">Ω</text>
<text id="p4" x="25.72" y="431.50" font-family="Liberation Sans, sans-serif" font-size="11.0" fill="#000" textLength="14.28" lengthAdjust="spacingAndGlyphs" stroke="#000" stroke-width="0.2">C3</text>
<text id="p5" x="25.76" y="443.20" font-family="Liberation Sans, sans-serif" font-size="11.0" fill="#000" textLength="14.27" lengthAdjust="spacingAndGlyphs" stroke="#000" stroke-width="0.2">C4</text>
<text id="q0" x="519.20" y="430.40" font-family="Liberation Sans, sans-serif" font-size="11.0" fill="#e6e6e6" textLength="46.01" lengthAdjust="spacingAndGlyphs">500ps/div</text>
<text id="q1" x="519.67" y="442.00" font-family="Liberation Sans, sans-serif" font-size="11.0" fill="#e6e6e6" textLength="103.76" lengthAdjust="spacingAndGlyphs">10.0GS/s IT 10.0ps/pt</text>
<text id="q2" x="521.69" y="454.80" font-family="Liberation Sans, sans-serif" font-size="11.0" fill="#100010" textLength="6.56" lengthAdjust="spacingAndGlyphs" stroke="#000" stroke-width="0.2">A</text>
<text id="q3" x="531.58" y="454.80" font-family="Liberation Sans, sans-serif" font-size="11.0" fill="#000" textLength="14.38" lengthAdjust="spacingAndGlyphs" stroke="#000" stroke-width="0.2">C3</text>
<text id="q4" x="560.07" y="453.30" font-family="Liberation Sans, sans-serif" font-size="11.0" fill="#e6e6e6" textLength="37.62" lengthAdjust="spacingAndGlyphs">100.0mV</text>
<text id="k3" x="5.16" y="131.60" font-family="Liberation Sans, sans-serif" font-size="8.8" fill="#d000d8" textLength="5.04" lengthAdjust="spacingAndGlyphs">3</text>
<text id="k4" x="4.90" y="225.60" font-family="Liberation Sans, sans-serif" font-size="10.0" fill="#003c00" textLength="6.26" lengthAdjust="spacingAndGlyphs" stroke="#003c00" stroke-width="0.3">4</text>
</svg>
</body></html>
